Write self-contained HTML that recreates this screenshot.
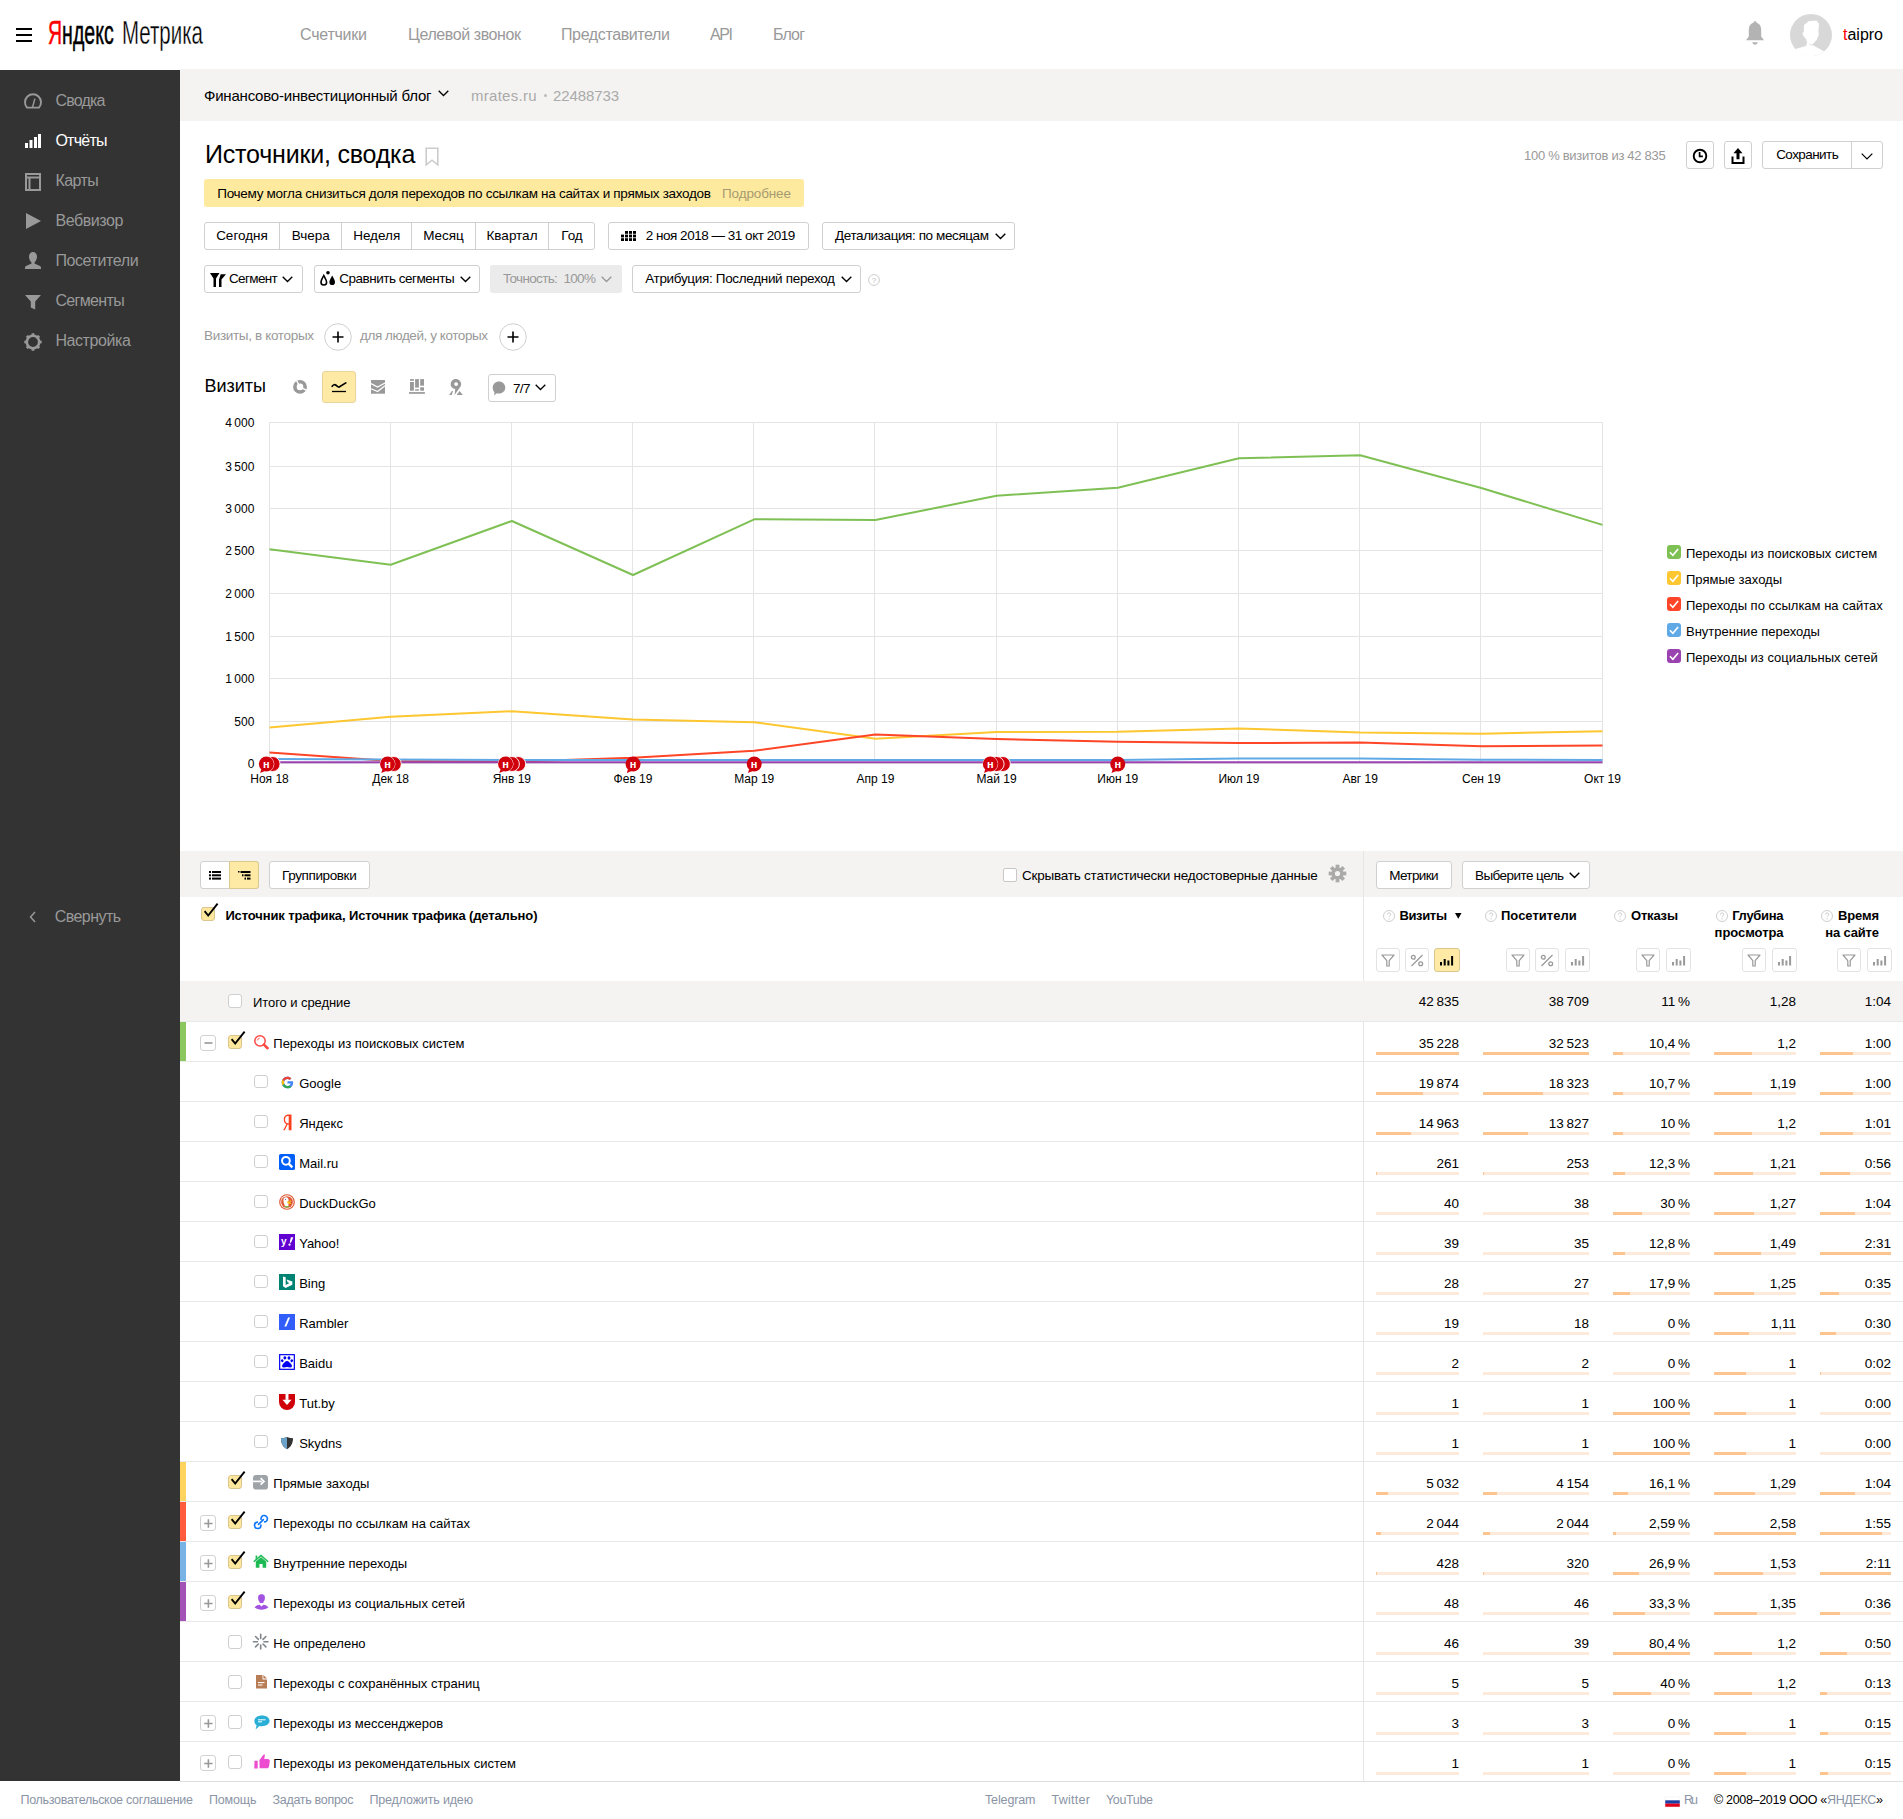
<!DOCTYPE html>
<html><head><meta charset="utf-8"><title>Источники, сводка</title>
<style>
html,body{margin:0;padding:0;}
body{width:1903px;height:1819px;position:relative;overflow:hidden;background:#fff;font-family:'Liberation Sans', sans-serif;}
.t{position:absolute;white-space:pre;}
svg{overflow:visible}
</style></head><body>
<div style="position:absolute;left:16px;top:28px;width:16px;height:2px;background:#000"></div><div style="position:absolute;left:16px;top:34px;width:16px;height:2px;background:#000"></div><div style="position:absolute;left:16px;top:40px;width:16px;height:2px;background:#000"></div><div class="t" style="left:47.8px;top:16.2px;font-size:33px;line-height:33px;font-weight:400;transform:scaleX(0.592);transform-origin:0 0;-webkit-text-stroke:0.5px #000;"><span style="color:#f00;-webkit-text-stroke:0.5px #f00">Я</span>ндекс</div><div class="t" style="left:121.6px;top:16.2px;font-size:33px;line-height:33px;font-weight:400;transform:scaleX(0.620);transform-origin:0 0;-webkit-text-stroke:0.35px #fff;">Метрика</div><div class="t" style="top:26.86px;font-size:16px;line-height:16px;color:#999;font-weight:400;letter-spacing:-0.232px;left:300.00px;">Счетчики</div><div class="t" style="top:26.86px;font-size:16px;line-height:16px;color:#999;font-weight:400;letter-spacing:-0.410px;left:408.00px;">Целевой звонок</div><div class="t" style="top:26.86px;font-size:16px;line-height:16px;color:#999;font-weight:400;letter-spacing:-0.380px;left:561.00px;">Представители</div><div class="t" style="top:26.86px;font-size:16px;line-height:16px;color:#999;font-weight:400;letter-spacing:-1.398px;left:710.00px;">API</div><div class="t" style="top:26.86px;font-size:16px;line-height:16px;color:#999;font-weight:400;letter-spacing:-0.859px;left:773.00px;">Блог</div><svg style="position:absolute;left:1745px;top:20px" width="20" height="26" viewBox="0 0 20 26"><path d="M10 1.2c1 0 1.6.7 1.6 1.6 3.2.9 4.6 3.6 4.6 7.2v6.6l2.8 3.6H1l2.8-3.6V10c0-3.6 1.4-6.3 4.6-7.2 0-.9.6-1.6 1.6-1.6z" fill="#b3b3b3"/><path d="M7.2 22.2h5.6c-.4 1.6-1.4 2.5-2.8 2.5s-2.4-.9-2.8-2.5z" fill="#b3b3b3"/></svg><svg style="position:absolute;left:1790px;top:14px" width="42" height="42" viewBox="0 0 42 42"><circle cx="21" cy="21" r="21" fill="#d8d8d8"/><path d="M13.9 11.2L18.5 7.2L26.5 6.6L29 9.7L28.4 17.4L28.8 20.7L26.6 26L22.6 30.2Q19.8 31 18.2 29.6L17 28.5L16.2 25.2L13.6 22.3L12.4 19.6L13.9 17.4Z" fill="#fff"/><path d="M4.6 35.2L15.9 31.9L17.2 28.6Q19.6 31.8 23 31.2L25.2 32.6L34 37.2A21 21 0 0 1 4.6 35.2Z" fill="#fff"/></svg><div class="t" style="top:27.06px;font-size:16px;line-height:16px;color:#000;font-weight:400;letter-spacing:-0.006px;left:1843.00px;"><span style="color:#f00">t</span>aipro</div><div style="position:absolute;left:0px;top:70px;width:180px;height:1711px;background:#333"></div><div class="t" style="top:93.46px;font-size:16px;line-height:16px;color:#999;font-weight:400;letter-spacing:-0.783px;left:55.40px;">Сводка</div><div class="t" style="top:133.46px;font-size:16px;line-height:16px;color:#fff;font-weight:400;letter-spacing:-0.729px;left:55.40px;">Отчёты</div><div class="t" style="top:173.46px;font-size:16px;line-height:16px;color:#999;font-weight:400;letter-spacing:-0.573px;left:55.40px;">Карты</div><div class="t" style="top:213.46px;font-size:16px;line-height:16px;color:#999;font-weight:400;letter-spacing:-0.422px;left:55.40px;">Вебвизор</div><div class="t" style="top:253.46px;font-size:16px;line-height:16px;color:#999;font-weight:400;letter-spacing:-0.403px;left:55.40px;">Посетители</div><div class="t" style="top:293.46px;font-size:16px;line-height:16px;color:#999;font-weight:400;letter-spacing:-0.651px;left:55.40px;">Сегменты</div><div class="t" style="top:333.46px;font-size:16px;line-height:16px;color:#999;font-weight:400;letter-spacing:-0.408px;left:55.40px;">Настройка</div><svg style="position:absolute;left:24px;top:93px" width="18" height="16" viewBox="0 0 18 16"><path d="M3 14.6A8 8 0 1 1 15 14.6Z" fill="none" stroke="#999" stroke-width="1.9" stroke-linejoin="round"/><path d="M8.4 14.6L10.9 5.6" stroke="#999" stroke-width="1.5"/></svg><svg style="position:absolute;left:25px;top:134px" width="16" height="14" viewBox="0 0 16 14"><rect x="0" y="9" width="3" height="5" fill="#fff"/><rect x="4.5" y="6" width="3" height="8" fill="#fff"/><rect x="9" y="3" width="3" height="11" fill="#fff"/><rect x="13" y="0" width="3" height="14" fill="#fff"/></svg><svg style="position:absolute;left:25px;top:173px" width="16" height="18" viewBox="0 0 16 18"><rect x="1" y="1" width="14" height="16" fill="none" stroke="#999" stroke-width="2"/><path d="M1 4.5h14M4.5 4.5v12.5" stroke="#999" stroke-width="2"/></svg><svg style="position:absolute;left:26px;top:213px" width="15" height="16" viewBox="0 0 15 16"><path d="M0 0L15 8L0 16z" fill="#999"/></svg><svg style="position:absolute;left:25px;top:252px" width="16" height="17" viewBox="0 0 16 17"><path d="M8 0c2.6 0 4 2.2 4 4.8 0 2.5-1.3 4.6-2.5 5.6v1l5.5 2.6c.6.3 1 .9 1 1.6V17H0v-1.4c0-.7.4-1.3 1-1.6l5.5-2.6v-1C5.3 9.4 4 7.3 4 4.8 4 2.2 5.4 0 8 0z" fill="#999"/></svg><svg style="position:absolute;left:25px;top:295px" width="16" height="15" viewBox="0 0 16 15"><path d="M0 0h16L10.2 6.4V14.6L5.8 12.4V6.4z" fill="#999"/></svg><svg style="position:absolute;left:24px;top:333px" width="18" height="18" viewBox="0 0 18 18"><path d="M7.7 0.3h2.6l.5 3.2h-3.6z" transform="rotate(0 9 9)" fill="#999"/><path d="M7.7 0.3h2.6l.5 3.2h-3.6z" transform="rotate(45 9 9)" fill="#999"/><path d="M7.7 0.3h2.6l.5 3.2h-3.6z" transform="rotate(90 9 9)" fill="#999"/><path d="M7.7 0.3h2.6l.5 3.2h-3.6z" transform="rotate(135 9 9)" fill="#999"/><path d="M7.7 0.3h2.6l.5 3.2h-3.6z" transform="rotate(180 9 9)" fill="#999"/><path d="M7.7 0.3h2.6l.5 3.2h-3.6z" transform="rotate(225 9 9)" fill="#999"/><path d="M7.7 0.3h2.6l.5 3.2h-3.6z" transform="rotate(270 9 9)" fill="#999"/><path d="M7.7 0.3h2.6l.5 3.2h-3.6z" transform="rotate(315 9 9)" fill="#999"/><circle cx="9" cy="9" r="6.2" fill="none" stroke="#999" stroke-width="2.6"/></svg><svg style="position:absolute;left:29px;top:911px" width="8" height="12" viewBox="0 0 8 12"><path d="M6 1L1.5 6L6 11" fill="none" stroke="#999" stroke-width="1.5"/></svg><div class="t" style="top:909.46px;font-size:16px;line-height:16px;color:#999;font-weight:400;letter-spacing:-0.567px;left:54.80px;">Свернуть</div><div style="position:absolute;left:180px;top:69px;width:1723px;height:52px;background:#f4f3f1"></div><div class="t" style="top:88.10px;font-size:15px;line-height:15px;color:#000;font-weight:400;letter-spacing:-0.206px;left:204.00px;">Финансово-инвестиционный блог</div><svg style="position:absolute;left:438px;top:90px" width="11" height="7" viewBox="0 0 11 7"><path d="M.7.7L5.5 5.5L10.3.7" fill="none" stroke="#000" stroke-width="1.3"/></svg><div class="t" style="top:88.10px;font-size:15px;line-height:15px;color:#aaa;font-weight:400;letter-spacing:0.268px;left:471.00px;">mrates.ru</div><div style="position:absolute;left:543.5px;top:94px;width:3.0px;height:3px;background:#bbb;border-radius:50%"></div><div class="t" style="top:88.10px;font-size:15px;line-height:15px;color:#aaa;font-weight:400;letter-spacing:-0.107px;left:553.00px;">22488733</div><div class="t" style="top:141.94px;font-size:25px;line-height:25px;color:#000;font-weight:400;letter-spacing:-0.195px;left:205.00px;">Источники, сводка</div><svg style="position:absolute;left:425px;top:147px" width="14" height="20" viewBox="0 0 14 20"><path d="M1.2 1.2h11.6v16.6L7 13.2l-5.8 4.6z" fill="none" stroke="#ccc" stroke-width="1.6"/></svg><div class="t" style="top:148.50px;font-size:13px;line-height:13px;color:#999;font-weight:400;letter-spacing:-0.287px;left:1524.00px;">100 % визитов из 42 835</div><div style="position:absolute;left:1686px;top:141px;width:28px;height:28px;background:#fff;border:1px solid #d0d0d0;border-radius:3px;box-sizing:border-box;"></div><svg style="position:absolute;left:1692px;top:148px" width="16" height="16" viewBox="0 0 16 16"><circle cx="8" cy="8" r="6.3" fill="none" stroke="#000" stroke-width="1.9"/><path d="M7.6 4v4.4h3.3" fill="none" stroke="#000" stroke-width="1.7"/></svg><div style="position:absolute;left:1724px;top:141px;width:28px;height:28px;background:#fff;border:1px solid #d0d0d0;border-radius:3px;box-sizing:border-box;"></div><svg style="position:absolute;left:1731px;top:147px" width="14" height="18" viewBox="0 0 14 18"><path d="M7 1L2.5 6.2h3v6h3v-6h3z" fill="#000"/><path d="M1.5 9.5v6.5h11v-6.5" fill="none" stroke="#000" stroke-width="2"/></svg><div style="position:absolute;left:1762px;top:141px;width:121px;height:28px;background:#fff;border:1px solid #d0d0d0;border-radius:3px;box-sizing:border-box;"></div><div style="position:absolute;left:1851px;top:141px;width:1px;height:28px;background:#d0d0d0"></div><div class="t" style="top:147.77px;font-size:13.5px;line-height:13.5px;color:#000;font-weight:400;letter-spacing:-0.574px;left:1776.20px;">Сохранить</div><svg style="position:absolute;left:1861px;top:153px" width="12" height="7" viewBox="0 0 12 7"><path d="M.7.7L6 6L11.3.7" fill="none" stroke="#000" stroke-width="1.2"/></svg><div style="position:absolute;left:204px;top:179px;width:600px;height:28px;background:#feea9f;border-radius:3px"></div><div class="t" style="top:186.77px;font-size:13.5px;line-height:13.5px;color:#000;font-weight:400;letter-spacing:-0.300px;left:217.30px;">Почему могла снизиться доля переходов по ссылкам на сайтах и прямых заходов</div><div class="t" style="top:186.77px;font-size:13.5px;line-height:13.5px;color:#a69a72;font-weight:400;letter-spacing:-0.127px;left:722.00px;">Подробнее</div><div style="position:absolute;left:204px;top:222px;width:391px;height:28px;background:#fff;border:1px solid #d0d0d0;border-radius:3px;box-sizing:border-box;"></div><div style="position:absolute;left:279px;top:223px;width:1px;height:26px;background:#d0d0d0"></div><div style="position:absolute;left:341.4px;top:223px;width:1.0px;height:26px;background:#d0d0d0"></div><div style="position:absolute;left:411px;top:223px;width:1px;height:26px;background:#d0d0d0"></div><div style="position:absolute;left:475px;top:223px;width:1px;height:26px;background:#d0d0d0"></div><div style="position:absolute;left:548px;top:223px;width:1px;height:26px;background:#d0d0d0"></div><div class="t" style="top:228.77px;font-size:13.5px;line-height:13.5px;color:#000;font-weight:400;left:42.00px;width:400px;text-align:center;">Сегодня</div><div class="t" style="top:228.77px;font-size:13.5px;line-height:13.5px;color:#000;font-weight:400;left:110.70px;width:400px;text-align:center;">Вчера</div><div class="t" style="top:228.77px;font-size:13.5px;line-height:13.5px;color:#000;font-weight:400;left:176.70px;width:400px;text-align:center;">Неделя</div><div class="t" style="top:228.77px;font-size:13.5px;line-height:13.5px;color:#000;font-weight:400;left:243.50px;width:400px;text-align:center;">Месяц</div><div class="t" style="top:228.77px;font-size:13.5px;line-height:13.5px;color:#000;font-weight:400;left:312.00px;width:400px;text-align:center;">Квартал</div><div class="t" style="top:228.77px;font-size:13.5px;line-height:13.5px;color:#000;font-weight:400;left:372.00px;width:400px;text-align:center;">Год</div><div style="position:absolute;left:608px;top:222px;width:201px;height:28px;background:#fff;border:1px solid #d0d0d0;border-radius:3px;box-sizing:border-box;"></div><svg style="position:absolute;left:621px;top:230.5px" width="15" height="10" viewBox="0 0 15 10"><rect x="4" y="0.0" width="3" height="2.8" fill="#000"/><rect x="8" y="0.0" width="3" height="2.8" fill="#000"/><rect x="12" y="0.0" width="3" height="2.8" fill="#000"/><rect x="0" y="3.6" width="3" height="2.8" fill="#000"/><rect x="4" y="3.6" width="3" height="2.8" fill="#000"/><rect x="8" y="3.6" width="3" height="2.8" fill="#000"/><rect x="12" y="3.6" width="3" height="2.8" fill="#000"/><rect x="0" y="7.2" width="3" height="2.8" fill="#000"/><rect x="4" y="7.2" width="3" height="2.8" fill="#000"/><rect x="8" y="7.2" width="3" height="2.8" fill="#000"/><rect x="12" y="7.2" width="3" height="2.8" fill="#000"/></svg><div class="t" style="top:229.37px;font-size:13.5px;line-height:13.5px;color:#000;font-weight:400;letter-spacing:-0.479px;left:645.70px;">2 ноя 2018 — 31 окт 2019</div><div style="position:absolute;left:822px;top:222px;width:193px;height:28px;background:#fff;border:1px solid #d0d0d0;border-radius:3px;box-sizing:border-box;"></div><div class="t" style="top:229.37px;font-size:13.5px;line-height:13.5px;color:#000;font-weight:400;letter-spacing:-0.404px;left:835.00px;">Детализация: по месяцам</div><svg style="position:absolute;left:995px;top:233px" width="11" height="7" viewBox="0 0 11 7"><path d="M.7.7L5.5 5.5L10.3.7" fill="none" stroke="#000" stroke-width="1.4"/></svg><div style="position:absolute;left:204px;top:265px;width:99px;height:28px;background:#fff;border:1px solid #d0d0d0;border-radius:3px;box-sizing:border-box;"></div><svg style="position:absolute;left:210px;top:273px" width="16" height="14" viewBox="0 0 16 14"><path d="M0 0h9.5L6 5.5V14H3.5V5.5z" fill="#000"/><path d="M10.2 1.2L15.5 1.2L11 6.5V14H8.5V6.5z" fill="#000" transform="translate(0.5 0)"/></svg><div class="t" style="top:272.07px;font-size:13.5px;line-height:13.5px;color:#000;font-weight:400;letter-spacing:-0.635px;left:229.00px;">Сегмент</div><svg style="position:absolute;left:282px;top:276px" width="11" height="7" viewBox="0 0 11 7"><path d="M.7.7L5.5 5.5L10.3.7" fill="none" stroke="#000" stroke-width="1.4"/></svg><div style="position:absolute;left:314px;top:265px;width:166px;height:28px;background:#fff;border:1px solid #d0d0d0;border-radius:3px;box-sizing:border-box;"></div><svg style="position:absolute;left:320px;top:271px" width="16" height="15" viewBox="0 0 16 15"><circle cx="8" cy="1.8" r="1.8" fill="#000"/><path d="M3.8 4.5C2.5 7 1 9 1 11.2a2.8 2.8 0 0 0 5.6 0C6.6 9 5 7 3.8 4.5z" fill="none" stroke="#000" stroke-width="1.6"/><path d="M12.2 4.5C11 7 9.4 9 9.4 11.2a2.8 2.8 0 0 0 5.6 0C15 9 13.4 7 12.2 4.5z" fill="#000"/></svg><div class="t" style="top:272.07px;font-size:13.5px;line-height:13.5px;color:#000;font-weight:400;letter-spacing:-0.495px;left:339.30px;">Сравнить сегменты</div><svg style="position:absolute;left:459.5px;top:276px" width="11" height="7" viewBox="0 0 11 7"><path d="M.7.7L5.5 5.5L10.3.7" fill="none" stroke="#000" stroke-width="1.4"/></svg><div style="position:absolute;left:490px;top:265px;width:132px;height:28px;background:#ebebeb;border-radius:3px"></div><div class="t" style="top:272.07px;font-size:13.5px;line-height:13.5px;color:#999;font-weight:400;letter-spacing:-0.647px;left:502.90px;">Точность:  100%</div><svg style="position:absolute;left:600.5px;top:276px" width="11" height="7" viewBox="0 0 11 7"><path d="M.7.7L5.5 5.5L10.3.7" fill="none" stroke="#999" stroke-width="1.4"/></svg><div style="position:absolute;left:632px;top:265px;width:229px;height:28px;background:#fff;border:1px solid #d0d0d0;border-radius:3px;box-sizing:border-box;"></div><div class="t" style="top:272.07px;font-size:13.5px;line-height:13.5px;color:#000;font-weight:400;letter-spacing:-0.328px;left:645.20px;">Атрибуция: Последний переход</div><svg style="position:absolute;left:840.5px;top:276px" width="11" height="7" viewBox="0 0 11 7"><path d="M.7.7L5.5 5.5L10.3.7" fill="none" stroke="#000" stroke-width="1.4"/></svg><svg style="position:absolute;left:868px;top:274px" width="12" height="12" viewBox="0 0 12 12"><circle cx="6" cy="6" r="5.4" fill="none" stroke="#ccc" stroke-width="1"/><text x="6" y="9" font-size="8" text-anchor="middle" fill="#bbb" font-family="Liberation Sans">?</text></svg><div class="t" style="top:328.57px;font-size:13.5px;line-height:13.5px;color:#999;font-weight:400;letter-spacing:-0.335px;left:204.00px;">Визиты, в которых</div><svg style="position:absolute;left:324px;top:323px" width="28" height="28" viewBox="0 0 28 28"><circle cx="14" cy="14" r="13.3" fill="#fff" stroke="#d0d0d0" stroke-width="1"/><path d="M14 8.5v11M8.5 14h11" stroke="#000" stroke-width="1.6"/></svg><div class="t" style="top:328.57px;font-size:13.5px;line-height:13.5px;color:#999;font-weight:400;letter-spacing:-0.433px;left:360.00px;">для людей, у которых</div><svg style="position:absolute;left:498.5px;top:323px" width="28" height="28" viewBox="0 0 28 28"><circle cx="14" cy="14" r="13.3" fill="#fff" stroke="#d0d0d0" stroke-width="1"/><path d="M14 8.5v11M8.5 14h11" stroke="#000" stroke-width="1.6"/></svg><div class="t" style="top:376.76px;font-size:18px;line-height:18px;color:#000;font-weight:400;letter-spacing:-0.032px;left:204.60px;">Визиты</div><svg style="position:absolute;left:292px;top:379px" width="16" height="16" viewBox="0 0 16 16"><circle cx="8" cy="7.9" r="5.1" fill="none" stroke="#999" stroke-width="3.6"/><path d="M8 7.9L4.6 1.6M8 7.9L14.6 11.3" stroke="#fff" stroke-width="1.3"/></svg><div style="position:absolute;left:322px;top:371px;width:34px;height:32px;background:#feeaa5;border:1px solid #e8d39a;border-radius:3px;box-sizing:border-box"></div><svg style="position:absolute;left:331px;top:381px" width="16" height="12" viewBox="0 0 16 12"><path d="M1.2 5.3C2.4 3.5 3.6 3.3 5 4.3S7.2 6.5 8.2 6L14.8 1.9" fill="none" stroke="#000" stroke-width="1.7" stroke-linecap="round"/><path d="M1 10.5h14" stroke="#000" stroke-width="1.3"/></svg><svg style="position:absolute;left:371px;top:380px" width="14" height="14" viewBox="0 0 14 14"><rect x="0" y="0" width="14" height="13.7" fill="#999"/><path d="M0 3.6L6.6 7.1L14 3M0 8.8L6.6 11.5L14 5.7" fill="none" stroke="#fff" stroke-width="1.2"/></svg><svg style="position:absolute;left:409px;top:379px" width="16" height="16" viewBox="0 0 16 16"><g fill="#999"><rect x="1" y="0.1" width="3.9" height="1.7"/><rect x="1" y="3" width="3.9" height="8.7"/><rect x="6.1" y="0.1" width="3.8" height="8.5"/><rect x="6.1" y="10.2" width="3.8" height="1.5"/><rect x="11.2" y="0.1" width="3.8" height="6.6"/><rect x="11.2" y="8.3" width="3.8" height="3.4"/><rect x="0" y="13.1" width="15.9" height="1.7"/></g></svg><svg style="position:absolute;left:449px;top:379px" width="15" height="16" viewBox="0 0 15 16"><path d="M7.1 0.1A5 5 0 0 1 11.7 7.2L5.6 15.9L6.2 10.1A5 5 0 0 1 7.1 0.1z" fill="#999"/><circle cx="7.1" cy="5.1" r="1.9" fill="#fff"/><path d="M0.1 15.9L2.9 12.1H4L2.7 15.9zM7.6 15.9L10.7 12L13.8 15.9z" fill="#999"/></svg><div style="position:absolute;left:488px;top:374px;width:68px;height:28px;background:#fff;border:1px solid #d0d0d0;border-radius:3px;box-sizing:border-box;"></div><svg style="position:absolute;left:492px;top:381px" width="14" height="15" viewBox="0 0 14 15"><path d="M7 0.4c3.5 0 6.3 2.7 6.3 6.2S10.5 12.6 7 12.6c-.8 0-1.6-.1-2.3-.4L2.2 14.4l.3-3.2C1.3 10 .7 8.4.7 6.6.7 3.1 3.5.4 7 .4z" fill="#999"/></svg><div class="t" style="top:381.57px;font-size:13.5px;line-height:13.5px;color:#000;font-weight:400;letter-spacing:-0.691px;left:513.00px;">7/7</div><svg style="position:absolute;left:535px;top:384px" width="11" height="7" viewBox="0 0 11 7"><path d="M.7.7L5.5 5.5L10.3.7" fill="none" stroke="#000" stroke-width="1.3"/></svg><svg style="position:absolute;left:0;top:0" width="1903" height="1819"><path d="M269 422.5H1602.5" stroke="#e4e4e4" stroke-width="1"/><path d="M269 466.5H1602.5" stroke="#e4e4e4" stroke-width="1"/><path d="M269 508.5H1602.5" stroke="#e4e4e4" stroke-width="1"/><path d="M269 550.5H1602.5" stroke="#e4e4e4" stroke-width="1"/><path d="M269 593.5H1602.5" stroke="#e4e4e4" stroke-width="1"/><path d="M269 636.5H1602.5" stroke="#e4e4e4" stroke-width="1"/><path d="M269 678.5H1602.5" stroke="#e4e4e4" stroke-width="1"/><path d="M269 721.5H1602.5" stroke="#e4e4e4" stroke-width="1"/><path d="M269 763.5H1602.5" stroke="#e4e4e4" stroke-width="1"/><path d="M269.5 422V763.5" stroke="#e4e4e4" stroke-width="1"/><path d="M390.5 422V763.5" stroke="#e4e4e4" stroke-width="1"/><path d="M511.5 422V763.5" stroke="#e4e4e4" stroke-width="1"/><path d="M632.5 422V763.5" stroke="#e4e4e4" stroke-width="1"/><path d="M753.5 422V763.5" stroke="#e4e4e4" stroke-width="1"/><path d="M874.5 422V763.5" stroke="#e4e4e4" stroke-width="1"/><path d="M996.5 422V763.5" stroke="#e4e4e4" stroke-width="1"/><path d="M1117.5 422V763.5" stroke="#e4e4e4" stroke-width="1"/><path d="M1238.5 422V763.5" stroke="#e4e4e4" stroke-width="1"/><path d="M1359.5 422V763.5" stroke="#e4e4e4" stroke-width="1"/><path d="M1480.5 422V763.5" stroke="#e4e4e4" stroke-width="1"/><path d="M1602.5 422V763.5" stroke="#e4e4e4" stroke-width="1"/></svg><div class="t" style="top:416.64px;font-size:12px;line-height:12px;color:#000;font-weight:400;right:1648.70px;">4 000</div><div class="t" style="top:460.64px;font-size:12px;line-height:12px;color:#000;font-weight:400;right:1648.70px;">3 500</div><div class="t" style="top:502.64px;font-size:12px;line-height:12px;color:#000;font-weight:400;right:1648.70px;">3 000</div><div class="t" style="top:544.64px;font-size:12px;line-height:12px;color:#000;font-weight:400;right:1648.70px;">2 500</div><div class="t" style="top:587.64px;font-size:12px;line-height:12px;color:#000;font-weight:400;right:1648.70px;">2 000</div><div class="t" style="top:630.64px;font-size:12px;line-height:12px;color:#000;font-weight:400;right:1648.70px;">1 500</div><div class="t" style="top:672.64px;font-size:12px;line-height:12px;color:#000;font-weight:400;right:1648.70px;">1 000</div><div class="t" style="top:715.64px;font-size:12px;line-height:12px;color:#000;font-weight:400;right:1648.70px;">500</div><div class="t" style="top:757.64px;font-size:12px;line-height:12px;color:#000;font-weight:400;right:1648.70px;">0</div><div class="t" style="top:772.84px;font-size:12px;line-height:12px;color:#000;font-weight:400;left:69.50px;width:400px;text-align:center;">Ноя 18</div><div class="t" style="top:772.84px;font-size:12px;line-height:12px;color:#000;font-weight:400;left:190.68px;width:400px;text-align:center;">Дек 18</div><div class="t" style="top:772.84px;font-size:12px;line-height:12px;color:#000;font-weight:400;left:311.86px;width:400px;text-align:center;">Янв 19</div><div class="t" style="top:772.84px;font-size:12px;line-height:12px;color:#000;font-weight:400;left:433.05px;width:400px;text-align:center;">Фев 19</div><div class="t" style="top:772.84px;font-size:12px;line-height:12px;color:#000;font-weight:400;left:554.23px;width:400px;text-align:center;">Мар 19</div><div class="t" style="top:772.84px;font-size:12px;line-height:12px;color:#000;font-weight:400;left:675.41px;width:400px;text-align:center;">Апр 19</div><div class="t" style="top:772.84px;font-size:12px;line-height:12px;color:#000;font-weight:400;left:796.59px;width:400px;text-align:center;">Май 19</div><div class="t" style="top:772.84px;font-size:12px;line-height:12px;color:#000;font-weight:400;left:917.77px;width:400px;text-align:center;">Июн 19</div><div class="t" style="top:772.84px;font-size:12px;line-height:12px;color:#000;font-weight:400;left:1038.95px;width:400px;text-align:center;">Июл 19</div><div class="t" style="top:772.84px;font-size:12px;line-height:12px;color:#000;font-weight:400;left:1160.14px;width:400px;text-align:center;">Авг 19</div><div class="t" style="top:772.84px;font-size:12px;line-height:12px;color:#000;font-weight:400;left:1281.32px;width:400px;text-align:center;">Сен 19</div><div class="t" style="top:772.84px;font-size:12px;line-height:12px;color:#000;font-weight:400;left:1402.50px;width:400px;text-align:center;">Окт 19</div><svg style="position:absolute;left:0;top:0" width="1903" height="1819"><path d="M269.5 549.3 L390.7 564.7 L511.9 521.0 L633.0 575.0 L754.2 519.3 L875.4 520.0 L996.6 495.8 L1117.8 487.7 L1239.0 458.2 L1360.1 455.3 L1481.3 488.0 L1602.5 524.9" fill="none" stroke="#7fc054" stroke-width="2" stroke-linejoin="round"/><path d="M269.5 727.6 L390.7 716.7 L511.9 711.2 L633.0 719.4 L754.2 722.2 L875.4 738.7 L996.6 732.0 L1117.8 731.7 L1239.0 728.4 L1360.1 732.5 L1481.3 733.7 L1602.5 731.3" fill="none" stroke="#fdc731" stroke-width="2" stroke-linejoin="round"/><path d="M269.5 752.6 L390.7 761.0 L511.9 761.8 L633.0 757.7 L754.2 750.8 L875.4 734.5 L996.6 739.0 L1117.8 741.8 L1239.0 743.0 L1360.1 742.6 L1481.3 746.2 L1602.5 745.4" fill="none" stroke="#ff4527" stroke-width="2" stroke-linejoin="round"/><path d="M269.5 759.0 L390.7 759.5 L511.9 760.0 L633.0 760.0 L754.2 760.0 L875.4 760.0 L996.6 760.0 L1117.8 760.0 L1239.0 758.5 L1360.1 758.5 L1481.3 759.8 L1602.5 760.0" fill="none" stroke="#5fa9e6" stroke-width="2" stroke-linejoin="round"/><path d="M269.5 762.3 L390.7 762.3 L511.9 762.3 L633.0 762.3 L754.2 762.3 L875.4 762.3 L996.6 762.3 L1117.8 762.3 L1239.0 762.3 L1360.1 762.3 L1481.3 762.3 L1602.5 762.3" fill="none" stroke="#9a43b0" stroke-width="2" stroke-linejoin="round"/></svg><svg style="position:absolute;left:0;top:0" width="1903" height="1819"><circle cx="272.6" cy="764" r="7.5" fill="#d0000d" stroke="#fff" stroke-width="0.9"/><circle cx="266.4" cy="764" r="7.9" fill="#fff"/><path d="M261.15000000000003 769.5L260.15000000000003 773L264.85 771z" fill="#d0000d"/><circle cx="266.35" cy="764" r="7.5" fill="#d0000d"/><text x="266.4" y="768.2" font-size="11" font-weight="700" text-anchor="middle" fill="#fff" font-family="Liberation Sans">н</text><circle cx="393.8" cy="764" r="7.5" fill="#d0000d" stroke="#fff" stroke-width="0.9"/><circle cx="387.5" cy="764" r="7.9" fill="#fff"/><path d="M382.3318181818182 769.5L381.3318181818182 773L386.0318181818182 771z" fill="#d0000d"/><circle cx="387.5318181818182" cy="764" r="7.5" fill="#d0000d"/><text x="387.5" y="768.2" font-size="11" font-weight="700" text-anchor="middle" fill="#fff" font-family="Liberation Sans">н</text><circle cx="518.2" cy="764" r="7.5" fill="#d0000d" stroke="#fff" stroke-width="0.9"/><circle cx="511.9" cy="764" r="7.5" fill="#d0000d" stroke="#fff" stroke-width="0.9"/><circle cx="505.6" cy="764" r="7.9" fill="#fff"/><path d="M500.3636363636364 769.5L499.3636363636364 773L504.06363636363636 771z" fill="#d0000d"/><circle cx="505.56363636363636" cy="764" r="7.5" fill="#d0000d"/><text x="505.6" y="768.2" font-size="11" font-weight="700" text-anchor="middle" fill="#fff" font-family="Liberation Sans">н</text><path d="M627.8454545454545 769.5L626.8454545454545 773L631.5454545454545 771z" fill="#d0000d"/><circle cx="633.0454545454545" cy="764" r="7.5" fill="#d0000d"/><text x="633.0" y="768.2" font-size="11" font-weight="700" text-anchor="middle" fill="#fff" font-family="Liberation Sans">н</text><path d="M749.0272727272727 769.5L748.0272727272727 773L752.7272727272727 771z" fill="#d0000d"/><circle cx="754.2272727272727" cy="764" r="7.5" fill="#d0000d"/><text x="754.2" y="768.2" font-size="11" font-weight="700" text-anchor="middle" fill="#fff" font-family="Liberation Sans">н</text><circle cx="1002.9" cy="764" r="7.5" fill="#d0000d" stroke="#fff" stroke-width="0.9"/><circle cx="996.6" cy="764" r="7.5" fill="#d0000d" stroke="#fff" stroke-width="0.9"/><circle cx="990.3" cy="764" r="7.9" fill="#fff"/><path d="M985.0909090909091 769.5L984.0909090909091 773L988.7909090909092 771z" fill="#d0000d"/><circle cx="990.2909090909092" cy="764" r="7.5" fill="#d0000d"/><text x="990.3" y="768.2" font-size="11" font-weight="700" text-anchor="middle" fill="#fff" font-family="Liberation Sans">н</text><path d="M1112.5727272727272 769.5L1111.5727272727272 773L1116.2727272727273 771z" fill="#d0000d"/><circle cx="1117.7727272727273" cy="764" r="7.5" fill="#d0000d"/><text x="1117.8" y="768.2" font-size="11" font-weight="700" text-anchor="middle" fill="#fff" font-family="Liberation Sans">н</text></svg><svg style="position:absolute;left:1667px;top:545px" width="14" height="14" viewBox="0 0 14 14"><rect width="14" height="14" rx="3" fill="#7fc054"/><path d="M2.9 7.3L5.9 10.3L11.1 4.1" fill="none" stroke="#fff" stroke-width="1.6"/></svg><div class="t" style="top:547.20px;font-size:13px;line-height:13px;color:#000;font-weight:400;left:1686.00px;">Переходы из поисковых систем</div><svg style="position:absolute;left:1667px;top:571px" width="14" height="14" viewBox="0 0 14 14"><rect width="14" height="14" rx="3" fill="#fdc731"/><path d="M2.9 7.3L5.9 10.3L11.1 4.1" fill="none" stroke="#fff" stroke-width="1.6"/></svg><div class="t" style="top:573.20px;font-size:13px;line-height:13px;color:#000;font-weight:400;left:1686.00px;">Прямые заходы</div><svg style="position:absolute;left:1667px;top:597px" width="14" height="14" viewBox="0 0 14 14"><rect width="14" height="14" rx="3" fill="#ff4527"/><path d="M2.9 7.3L5.9 10.3L11.1 4.1" fill="none" stroke="#fff" stroke-width="1.6"/></svg><div class="t" style="top:599.20px;font-size:13px;line-height:13px;color:#000;font-weight:400;left:1686.00px;">Переходы по ссылкам на сайтах</div><svg style="position:absolute;left:1667px;top:623px" width="14" height="14" viewBox="0 0 14 14"><rect width="14" height="14" rx="3" fill="#5fa9e6"/><path d="M2.9 7.3L5.9 10.3L11.1 4.1" fill="none" stroke="#fff" stroke-width="1.6"/></svg><div class="t" style="top:625.20px;font-size:13px;line-height:13px;color:#000;font-weight:400;left:1686.00px;">Внутренние переходы</div><svg style="position:absolute;left:1667px;top:649px" width="14" height="14" viewBox="0 0 14 14"><rect width="14" height="14" rx="3" fill="#9a43b0"/><path d="M2.9 7.3L5.9 10.3L11.1 4.1" fill="none" stroke="#fff" stroke-width="1.6"/></svg><div class="t" style="top:651.20px;font-size:13px;line-height:13px;color:#000;font-weight:400;left:1686.00px;">Переходы из социальных сетей</div><div style="position:absolute;left:180px;top:851px;width:1723px;height:46px;background:#f4f3f1"></div><div style="position:absolute;left:1363px;top:851px;width:1px;height:930px;background:#e6e6e6"></div><div style="position:absolute;left:200px;top:861px;width:59px;height:28px;background:#fff;border:1px solid #d0d0d0;border-radius:3px;box-sizing:border-box;"></div><div style="position:absolute;left:229px;top:861px;width:30px;height:28px;background:#feeaa5;border:1px solid #dcc78f;border-radius:0 3px 3px 0;box-sizing:border-box"></div><svg style="position:absolute;left:209px;top:871px" width="12" height="9" viewBox="0 0 12 9"><rect x="0" y="0" width="2" height="2" fill="#000"/><rect x="3" y="0" width="9" height="2" fill="#000"/><rect x="0" y="3.3" width="2" height="2" fill="#000"/><rect x="3" y="3.3" width="9" height="2" fill="#000"/><rect x="0" y="6.6" width="2" height="2" fill="#000"/><rect x="3" y="6.6" width="9" height="2" fill="#000"/></svg><svg style="position:absolute;left:238px;top:871px" width="13" height="9" viewBox="0 0 13 9"><rect x="0" y="0" width="1.5" height="1.5" fill="#000"/><rect x="2.5" y="0" width="10" height="2" fill="#000"/><rect x="4" y="3.3" width="1.5" height="2" fill="#000"/><rect x="6.5" y="3.3" width="6" height="2" fill="#000"/><rect x="6.5" y="6.6" width="1.5" height="2" fill="#000"/><rect x="9" y="6.6" width="3.5" height="2" fill="#000"/></svg><div style="position:absolute;left:269px;top:861px;width:101px;height:28px;background:#fff;border:1px solid #d0d0d0;border-radius:3px;box-sizing:border-box;"></div><div class="t" style="top:868.87px;font-size:13.5px;line-height:13.5px;color:#000;font-weight:400;letter-spacing:-0.377px;left:282.00px;">Группировки</div><div style="position:absolute;left:1003px;top:867.5px;width:14px;height:14.0px;background:#fff;border:1px solid #c8c8c8;border-radius:2px;box-sizing:border-box"></div><div class="t" style="top:868.97px;font-size:13.5px;line-height:13.5px;color:#000;font-weight:400;letter-spacing:-0.223px;left:1022.00px;">Скрывать статистически недостоверные данные</div><svg style="position:absolute;left:1328.5px;top:864.5px" width="17" height="17" viewBox="0 0 17 17"><rect x="6.6" y="-0.3" width="3.8" height="4" transform="rotate(0 8.5 8.5)" fill="#aaa"/><rect x="6.6" y="-0.3" width="3.8" height="4" transform="rotate(45 8.5 8.5)" fill="#aaa"/><rect x="6.6" y="-0.3" width="3.8" height="4" transform="rotate(90 8.5 8.5)" fill="#aaa"/><rect x="6.6" y="-0.3" width="3.8" height="4" transform="rotate(135 8.5 8.5)" fill="#aaa"/><rect x="6.6" y="-0.3" width="3.8" height="4" transform="rotate(180 8.5 8.5)" fill="#aaa"/><rect x="6.6" y="-0.3" width="3.8" height="4" transform="rotate(225 8.5 8.5)" fill="#aaa"/><rect x="6.6" y="-0.3" width="3.8" height="4" transform="rotate(270 8.5 8.5)" fill="#aaa"/><rect x="6.6" y="-0.3" width="3.8" height="4" transform="rotate(315 8.5 8.5)" fill="#aaa"/><circle cx="8.5" cy="8.5" r="6" fill="#aaa"/><circle cx="8.5" cy="8.5" r="2.6" fill="#f4f3f1"/></svg><div style="position:absolute;left:1376px;top:861px;width:76px;height:28px;background:#fff;border:1px solid #d0d0d0;border-radius:3px;box-sizing:border-box;"></div><div class="t" style="top:868.87px;font-size:13.5px;line-height:13.5px;color:#000;font-weight:400;letter-spacing:-0.640px;left:1389.20px;">Метрики</div><div style="position:absolute;left:1462px;top:861px;width:128px;height:28px;background:#fff;border:1px solid #d0d0d0;border-radius:3px;box-sizing:border-box;"></div><div class="t" style="top:868.87px;font-size:13.5px;line-height:13.5px;color:#000;font-weight:400;letter-spacing:-0.557px;left:1475.00px;">Выберите цель</div><svg style="position:absolute;left:1569px;top:872px" width="11" height="7" viewBox="0 0 11 7"><path d="M.7.7L5.5 5.5L10.3.7" fill="none" stroke="#000" stroke-width="1.4"/></svg><div style="position:absolute;left:201.2px;top:907.4px;width:13.599999999999994px;height:13.399999999999977px;background:#fde79f;border:1px solid #d9c58d;border-radius:3px;box-sizing:border-box;"></div><svg style="position:absolute;left:200.7px;top:903.4px" width="18" height="18" viewBox="0 0 18 18"><path d="M3.6 8.2L7.2 12.6L16.6 0.6" fill="none" stroke="#000" stroke-width="1.9" stroke-linejoin="miter"/></svg><div class="t" style="top:909.40px;font-size:13px;line-height:13px;color:#000;font-weight:700;letter-spacing:-0.123px;left:225.40px;">Источник трафика, Источник трафика (детально)</div><svg style="position:absolute;left:1382.7px;top:909.9px" width="12" height="12" viewBox="0 0 12 12"><circle cx="6" cy="6" r="5.5" fill="none" stroke="#cfcfcf" stroke-width="1"/><path d="M4.3 4.6c0-1 .8-1.7 1.7-1.7s1.7.6 1.7 1.5c0 1.2-1.6 1.3-1.6 2.6" fill="none" stroke="#c4c4c4" stroke-width="0.9"/><circle cx="6.1" cy="8.9" r="0.6" fill="#c4c4c4"/></svg><div class="t" style="top:908.80px;font-size:13px;line-height:13px;color:#000;font-weight:700;letter-spacing:-0.343px;left:1399.40px;">Визиты</div><svg style="position:absolute;left:1455px;top:913px" width="7" height="6" viewBox="0 0 7 6"><path d="M0 0h6.5L3.25 5.8z" fill="#000"/></svg><svg style="position:absolute;left:1484.8px;top:909.9px" width="12" height="12" viewBox="0 0 12 12"><circle cx="6" cy="6" r="5.5" fill="none" stroke="#cfcfcf" stroke-width="1"/><path d="M4.3 4.6c0-1 .8-1.7 1.7-1.7s1.7.6 1.7 1.5c0 1.2-1.6 1.3-1.6 2.6" fill="none" stroke="#c4c4c4" stroke-width="0.9"/><circle cx="6.1" cy="8.9" r="0.6" fill="#c4c4c4"/></svg><div class="t" style="top:908.80px;font-size:13px;line-height:13px;color:#000;font-weight:700;letter-spacing:0.010px;left:1501.00px;">Посетители</div><svg style="position:absolute;left:1613.9px;top:909.7px" width="12" height="12" viewBox="0 0 12 12"><circle cx="6" cy="6" r="5.5" fill="none" stroke="#cfcfcf" stroke-width="1"/><path d="M4.3 4.6c0-1 .8-1.7 1.7-1.7s1.7.6 1.7 1.5c0 1.2-1.6 1.3-1.6 2.6" fill="none" stroke="#c4c4c4" stroke-width="0.9"/><circle cx="6.1" cy="8.9" r="0.6" fill="#c4c4c4"/></svg><div class="t" style="top:908.80px;font-size:13px;line-height:13px;color:#000;font-weight:700;letter-spacing:-0.188px;left:1631.00px;">Отказы</div><svg style="position:absolute;left:1715.8px;top:909.7px" width="12" height="12" viewBox="0 0 12 12"><circle cx="6" cy="6" r="5.5" fill="none" stroke="#cfcfcf" stroke-width="1"/><path d="M4.3 4.6c0-1 .8-1.7 1.7-1.7s1.7.6 1.7 1.5c0 1.2-1.6 1.3-1.6 2.6" fill="none" stroke="#c4c4c4" stroke-width="0.9"/><circle cx="6.1" cy="8.9" r="0.6" fill="#c4c4c4"/></svg><div class="t" style="top:908.80px;font-size:13px;line-height:13px;color:#000;font-weight:700;letter-spacing:-0.293px;left:1732.20px;">Глубина</div><div class="t" style="top:926.20px;font-size:13px;line-height:13px;color:#000;font-weight:700;letter-spacing:-0.051px;left:1714.60px;">просмотра</div><svg style="position:absolute;left:1820.9px;top:909.7px" width="12" height="12" viewBox="0 0 12 12"><circle cx="6" cy="6" r="5.5" fill="none" stroke="#cfcfcf" stroke-width="1"/><path d="M4.3 4.6c0-1 .8-1.7 1.7-1.7s1.7.6 1.7 1.5c0 1.2-1.6 1.3-1.6 2.6" fill="none" stroke="#c4c4c4" stroke-width="0.9"/><circle cx="6.1" cy="8.9" r="0.6" fill="#c4c4c4"/></svg><div class="t" style="top:908.80px;font-size:13px;line-height:13px;color:#000;font-weight:700;letter-spacing:-0.148px;left:1838.00px;">Время</div><div class="t" style="top:926.20px;font-size:13px;line-height:13px;color:#000;font-weight:700;letter-spacing:-0.172px;left:1825.30px;">на сайте</div><div style="position:absolute;left:1376px;top:948px;width:24px;height:24px;background:#fff;border:1px solid #e3e3e3;border-radius:3px;box-sizing:border-box;"></div><svg style="position:absolute;left:1381px;top:954px" width="14" height="13" viewBox="0 0 14 13"><path d="M1 1h12L8.2 6.6V12H5.8V6.6z" fill="none" stroke="#999" stroke-width="1.2" stroke-linejoin="round"/></svg><div style="position:absolute;left:1405px;top:948px;width:24px;height:24px;background:#fff;border:1px solid #e3e3e3;border-radius:3px;box-sizing:border-box;"></div><svg style="position:absolute;left:1410px;top:954px" width="14" height="13" viewBox="0 0 14 13"><circle cx="3.3" cy="3.3" r="1.9" fill="none" stroke="#999" stroke-width="1.3"/><circle cx="10.7" cy="9.7" r="1.9" fill="none" stroke="#999" stroke-width="1.3"/><path d="M1.5 12L12.5 1" stroke="#999" stroke-width="1.3"/></svg><div style="position:absolute;left:1434px;top:948px;width:26px;height:24px;background:#feeaa5;border:1px solid #dcc78f;border-radius:3px;box-sizing:border-box;"></div><svg style="position:absolute;left:1440px;top:955px" width="14" height="11" viewBox="0 0 14 11"><rect x="0" y="7" width="2" height="3.5" fill="#000"/><rect x="3.7" y="4" width="2" height="6.5" fill="#000"/><rect x="7.4" y="5.5" width="2" height="5" fill="#000"/><rect x="11.1" y="1" width="2" height="9.5" fill="#000"/></svg><div style="position:absolute;left:1506px;top:948px;width:24px;height:24px;background:#fff;border:1px solid #e3e3e3;border-radius:3px;box-sizing:border-box;"></div><svg style="position:absolute;left:1511px;top:954px" width="14" height="13" viewBox="0 0 14 13"><path d="M1 1h12L8.2 6.6V12H5.8V6.6z" fill="none" stroke="#999" stroke-width="1.2" stroke-linejoin="round"/></svg><div style="position:absolute;left:1535px;top:948px;width:24px;height:24px;background:#fff;border:1px solid #e3e3e3;border-radius:3px;box-sizing:border-box;"></div><svg style="position:absolute;left:1540px;top:954px" width="14" height="13" viewBox="0 0 14 13"><circle cx="3.3" cy="3.3" r="1.9" fill="none" stroke="#999" stroke-width="1.3"/><circle cx="10.7" cy="9.7" r="1.9" fill="none" stroke="#999" stroke-width="1.3"/><path d="M1.5 12L12.5 1" stroke="#999" stroke-width="1.3"/></svg><div style="position:absolute;left:1564.5px;top:948px;width:25.0px;height:24px;background:#fff;border:1px solid #e3e3e3;border-radius:3px;box-sizing:border-box;"></div><svg style="position:absolute;left:1570.5px;top:955px" width="14" height="11" viewBox="0 0 14 11"><rect x="0" y="7" width="2" height="3.5" fill="#999"/><rect x="3.7" y="4" width="2" height="6.5" fill="#999"/><rect x="7.4" y="5.5" width="2" height="5" fill="#999"/><rect x="11.1" y="1" width="2" height="9.5" fill="#999"/></svg><div style="position:absolute;left:1636px;top:948px;width:24px;height:24px;background:#fff;border:1px solid #e3e3e3;border-radius:3px;box-sizing:border-box;"></div><svg style="position:absolute;left:1641px;top:954px" width="14" height="13" viewBox="0 0 14 13"><path d="M1 1h12L8.2 6.6V12H5.8V6.6z" fill="none" stroke="#999" stroke-width="1.2" stroke-linejoin="round"/></svg><div style="position:absolute;left:1665.5px;top:948px;width:25.0px;height:24px;background:#fff;border:1px solid #e3e3e3;border-radius:3px;box-sizing:border-box;"></div><svg style="position:absolute;left:1671.5px;top:955px" width="14" height="11" viewBox="0 0 14 11"><rect x="0" y="7" width="2" height="3.5" fill="#999"/><rect x="3.7" y="4" width="2" height="6.5" fill="#999"/><rect x="7.4" y="5.5" width="2" height="5" fill="#999"/><rect x="11.1" y="1" width="2" height="9.5" fill="#999"/></svg><div style="position:absolute;left:1742px;top:948px;width:24px;height:24px;background:#fff;border:1px solid #e3e3e3;border-radius:3px;box-sizing:border-box;"></div><svg style="position:absolute;left:1747px;top:954px" width="14" height="13" viewBox="0 0 14 13"><path d="M1 1h12L8.2 6.6V12H5.8V6.6z" fill="none" stroke="#999" stroke-width="1.2" stroke-linejoin="round"/></svg><div style="position:absolute;left:1771.5px;top:948px;width:25.0px;height:24px;background:#fff;border:1px solid #e3e3e3;border-radius:3px;box-sizing:border-box;"></div><svg style="position:absolute;left:1777.5px;top:955px" width="14" height="11" viewBox="0 0 14 11"><rect x="0" y="7" width="2" height="3.5" fill="#999"/><rect x="3.7" y="4" width="2" height="6.5" fill="#999"/><rect x="7.4" y="5.5" width="2" height="5" fill="#999"/><rect x="11.1" y="1" width="2" height="9.5" fill="#999"/></svg><div style="position:absolute;left:1837px;top:948px;width:24px;height:24px;background:#fff;border:1px solid #e3e3e3;border-radius:3px;box-sizing:border-box;"></div><svg style="position:absolute;left:1842px;top:954px" width="14" height="13" viewBox="0 0 14 13"><path d="M1 1h12L8.2 6.6V12H5.8V6.6z" fill="none" stroke="#999" stroke-width="1.2" stroke-linejoin="round"/></svg><div style="position:absolute;left:1866.5px;top:948px;width:25.0px;height:24px;background:#fff;border:1px solid #e3e3e3;border-radius:3px;box-sizing:border-box;"></div><svg style="position:absolute;left:1872.5px;top:955px" width="14" height="11" viewBox="0 0 14 11"><rect x="0" y="7" width="2" height="3.5" fill="#999"/><rect x="3.7" y="4" width="2" height="6.5" fill="#999"/><rect x="7.4" y="5.5" width="2" height="5" fill="#999"/><rect x="11.1" y="1" width="2" height="9.5" fill="#999"/></svg><div style="position:absolute;left:180px;top:981px;width:1723px;height:40px;background:#f4f3f1"></div><div style="position:absolute;left:228.3px;top:994.3px;width:13.599999999999994px;height:13.399999999999977px;background:#fff;border:1px solid #cfcfcf;border-radius:3px;box-sizing:border-box;"></div><div class="t" style="top:996.00px;font-size:13px;line-height:13px;color:#000;font-weight:400;letter-spacing:-0.077px;left:253.10px;">Итого и средние</div><div class="t" style="top:994.87px;font-size:13.5px;line-height:13.5px;color:#000;font-weight:400;right:444.00px;">42 835</div><div class="t" style="top:994.87px;font-size:13.5px;line-height:13.5px;color:#000;font-weight:400;right:314.00px;">38 709</div><div class="t" style="top:994.87px;font-size:13.5px;line-height:13.5px;color:#000;font-weight:400;right:213.00px;">11 %</div><div class="t" style="top:994.87px;font-size:13.5px;line-height:13.5px;color:#000;font-weight:400;right:107.00px;">1,28</div><div class="t" style="top:994.87px;font-size:13.5px;line-height:13.5px;color:#000;font-weight:400;right:12.00px;">1:04</div><div style="position:absolute;left:180px;top:1022px;width:6px;height:39px;background:#8cc65f"></div><div style="position:absolute;left:200px;top:1035.3px;width:15.599999999999994px;height:15.700000000000045px;background:#fff;border:1px solid #d3d3d3;border-radius:3px;box-sizing:border-box;"></div><svg style="position:absolute;left:203.5px;top:1042.3px" width="9" height="2" viewBox="0 0 9 2"><path d="M0.5 1h8" stroke="#999" stroke-width="1.6"/></svg><div style="position:absolute;left:228.3px;top:1035.3px;width:13.599999999999994px;height:13.400000000000091px;background:#fde79f;border:1px solid #d9c58d;border-radius:3px;box-sizing:border-box;"></div><svg style="position:absolute;left:227.8px;top:1031.3px" width="18" height="18" viewBox="0 0 18 18"><path d="M3.6 8.2L7.2 12.6L16.6 0.6" fill="none" stroke="#000" stroke-width="1.9" stroke-linejoin="miter"/></svg><div class="t" style="top:1037.00px;font-size:13px;line-height:13px;color:#000;font-weight:400;left:273.30px;">Переходы из поисковых систем</div><svg style="position:absolute;left:250px;top:1030px" width="22" height="24" viewBox="0 0 22 24"><circle cx="10" cy="10.9" r="5.2" fill="none" stroke="#ff4a44" stroke-width="1.5"/><path d="M7.4 10.4A2.9 2.9 0 0 1 9.6 8.1" fill="none" stroke="#ff4a44" stroke-width="0.9"/><path d="M13.9 14.6L17.6 18.2" stroke="#ff4a44" stroke-width="2.6" stroke-linecap="round"/></svg><div class="t" style="top:1037.17px;font-size:13.5px;line-height:13.5px;color:#000;font-weight:400;right:444.00px;">35 228</div><div style="position:absolute;left:1376px;top:1052px;width:83px;height:3px;background:#fdeadb"></div><div style="position:absolute;left:1376px;top:1052px;width:83.0px;height:3px;background:#fdc48f"></div><div class="t" style="top:1037.17px;font-size:13.5px;line-height:13.5px;color:#000;font-weight:400;right:314.00px;">32 523</div><div style="position:absolute;left:1483px;top:1052px;width:106px;height:3px;background:#fdeadb"></div><div style="position:absolute;left:1483px;top:1052px;width:106.0px;height:3px;background:#fdc48f"></div><div class="t" style="top:1037.17px;font-size:13.5px;line-height:13.5px;color:#000;font-weight:400;right:213.00px;">10,4 %</div><div style="position:absolute;left:1613px;top:1052px;width:77px;height:3px;background:#fdeadb"></div><div style="position:absolute;left:1613px;top:1052px;width:10.0px;height:3px;background:#fdc48f"></div><div class="t" style="top:1037.17px;font-size:13.5px;line-height:13.5px;color:#000;font-weight:400;right:107.00px;">1,2</div><div style="position:absolute;left:1714px;top:1052px;width:82px;height:3px;background:#fdeadb"></div><div style="position:absolute;left:1714px;top:1052px;width:38.09999999999991px;height:3px;background:#fdc48f"></div><div class="t" style="top:1037.17px;font-size:13.5px;line-height:13.5px;color:#000;font-weight:400;right:12.00px;">1:00</div><div style="position:absolute;left:1820px;top:1052px;width:71px;height:3px;background:#fdeadb"></div><div style="position:absolute;left:1820px;top:1052px;width:32.5px;height:3px;background:#fdc48f"></div><div style="position:absolute;left:254.2px;top:1075px;width:13.600000000000023px;height:13.400000000000091px;background:#fff;border:1px solid #cfcfcf;border-radius:3px;box-sizing:border-box;"></div><div class="t" style="top:1076.80px;font-size:13px;line-height:13px;color:#000;font-weight:400;left:299.20px;">Google</div><svg style="position:absolute;left:280.8px;top:1075.8px" width="13" height="13" viewBox="0 0 13 13"><path d="M11.9 5.3H6.5v2.3h3.1c-.3 1.4-1.5 2.3-3.1 2.3-1.9 0-3.4-1.5-3.4-3.4S4.6 3.1 6.5 3.1c.8 0 1.6.3 2.2.8l1.7-1.7C9.4 1.3 8 .7 6.5.7 3.3.7.7 3.3.7 6.5s2.6 5.8 5.8 5.8c3.3 0 5.6-2.3 5.6-5.6 0-.5 0-1-.2-1.4z" fill="#4285f4"/><path d="M1.4 3.7l1.9 1.4C3.8 3.9 5 3.1 6.5 3.1c.8 0 1.6.3 2.2.8l1.7-1.7C9.4 1.3 8 .7 6.5.7 4.3.7 2.4 1.9 1.4 3.7z" fill="#ea4335"/><path d="M6.5 12.3c1.5 0 2.9-.5 3.9-1.4L8.6 9.4c-.5.4-1.2.6-2.1.6-1.5 0-2.7-1-3.2-2.3l-1.9 1.5c1 1.8 2.9 3.1 5.1 3.1z" fill="#34a853"/><path d="M1.4 3.7C1 4.5.7 5.5.7 6.5s.3 2 .7 2.8l1.9-1.5c-.1-.4-.2-.8-.2-1.3s.1-.9.2-1.3z" fill="#fbbc05"/></svg><div class="t" style="top:1077.17px;font-size:13.5px;line-height:13.5px;color:#000;font-weight:400;right:444.00px;">19 874</div><div style="position:absolute;left:1376px;top:1092px;width:83px;height:3px;background:#fdeadb"></div><div style="position:absolute;left:1376px;top:1092px;width:46.799999999999955px;height:3px;background:#fdc48f"></div><div class="t" style="top:1077.17px;font-size:13.5px;line-height:13.5px;color:#000;font-weight:400;right:314.00px;">18 323</div><div style="position:absolute;left:1483px;top:1092px;width:106px;height:3px;background:#fdeadb"></div><div style="position:absolute;left:1483px;top:1092px;width:59.700000000000045px;height:3px;background:#fdc48f"></div><div class="t" style="top:1077.17px;font-size:13.5px;line-height:13.5px;color:#000;font-weight:400;right:213.00px;">10,7 %</div><div style="position:absolute;left:1613px;top:1092px;width:77px;height:3px;background:#fdeadb"></div><div style="position:absolute;left:1613px;top:1092px;width:10.200000000000045px;height:3px;background:#fdc48f"></div><div class="t" style="top:1077.17px;font-size:13.5px;line-height:13.5px;color:#000;font-weight:400;right:107.00px;">1,19</div><div style="position:absolute;left:1714px;top:1092px;width:82px;height:3px;background:#fdeadb"></div><div style="position:absolute;left:1714px;top:1092px;width:37.799999999999955px;height:3px;background:#fdc48f"></div><div class="t" style="top:1077.17px;font-size:13.5px;line-height:13.5px;color:#000;font-weight:400;right:12.00px;">1:00</div><div style="position:absolute;left:1820px;top:1092px;width:71px;height:3px;background:#fdeadb"></div><div style="position:absolute;left:1820px;top:1092px;width:32.5px;height:3px;background:#fdc48f"></div><div style="position:absolute;left:254.2px;top:1115px;width:13.600000000000023px;height:13.400000000000091px;background:#fff;border:1px solid #cfcfcf;border-radius:3px;box-sizing:border-box;"></div><div class="t" style="top:1116.80px;font-size:13px;line-height:13px;color:#000;font-weight:400;left:299.20px;">Яндекс</div><svg style="position:absolute;left:282.6px;top:1114px" width="10" height="17" viewBox="0 0 10 17"><path d="M5.7 16.2V10.6H4.6L1.7 16.2H.2l3.2-6C1.8 9.5.8 8.1.8 5.6.8 2.2 2.9.6 5.7.6h2.8v15.6zM5.7 1.9H4.9c-1.6 0-2.8 1-2.8 3.6 0 2.5 1.1 3.7 2.8 3.7h.8z" fill="#fc3f1d"/></svg><div class="t" style="top:1117.17px;font-size:13.5px;line-height:13.5px;color:#000;font-weight:400;right:444.00px;">14 963</div><div style="position:absolute;left:1376px;top:1132px;width:83px;height:3px;background:#fdeadb"></div><div style="position:absolute;left:1376px;top:1132px;width:35.299999999999955px;height:3px;background:#fdc48f"></div><div class="t" style="top:1117.17px;font-size:13.5px;line-height:13.5px;color:#000;font-weight:400;right:314.00px;">13 827</div><div style="position:absolute;left:1483px;top:1132px;width:106px;height:3px;background:#fdeadb"></div><div style="position:absolute;left:1483px;top:1132px;width:45.09999999999991px;height:3px;background:#fdc48f"></div><div class="t" style="top:1117.17px;font-size:13.5px;line-height:13.5px;color:#000;font-weight:400;right:213.00px;">10 %</div><div style="position:absolute;left:1613px;top:1132px;width:77px;height:3px;background:#fdeadb"></div><div style="position:absolute;left:1613px;top:1132px;width:9.599999999999909px;height:3px;background:#fdc48f"></div><div class="t" style="top:1117.17px;font-size:13.5px;line-height:13.5px;color:#000;font-weight:400;right:107.00px;">1,2</div><div style="position:absolute;left:1714px;top:1132px;width:82px;height:3px;background:#fdeadb"></div><div style="position:absolute;left:1714px;top:1132px;width:38.09999999999991px;height:3px;background:#fdc48f"></div><div class="t" style="top:1117.17px;font-size:13.5px;line-height:13.5px;color:#000;font-weight:400;right:12.00px;">1:01</div><div style="position:absolute;left:1820px;top:1132px;width:71px;height:3px;background:#fdeadb"></div><div style="position:absolute;left:1820px;top:1132px;width:33.09999999999991px;height:3px;background:#fdc48f"></div><div style="position:absolute;left:254.2px;top:1155px;width:13.600000000000023px;height:13.400000000000091px;background:#fff;border:1px solid #cfcfcf;border-radius:3px;box-sizing:border-box;"></div><div class="t" style="top:1156.80px;font-size:13px;line-height:13px;color:#000;font-weight:400;left:299.20px;">Mail.ru</div><svg style="position:absolute;left:279px;top:1154px" width="16" height="16" viewBox="0 0 12 12"><rect width="12" height="12" rx="1.2" fill="#005ff9"/><circle cx="5.2" cy="5.1" r="2.9" fill="none" stroke="#fff" stroke-width="1.5"/><path d="M7.2 7.2l2.8 2.8" stroke="#fff" stroke-width="1.8"/></svg><div class="t" style="top:1157.17px;font-size:13.5px;line-height:13.5px;color:#000;font-weight:400;right:444.00px;">261</div><div style="position:absolute;left:1376px;top:1172px;width:83px;height:3px;background:#fdeadb"></div><div style="position:absolute;left:1376px;top:1172px;width:1px;height:3px;background:#fdc48f"></div><div class="t" style="top:1157.17px;font-size:13.5px;line-height:13.5px;color:#000;font-weight:400;right:314.00px;">253</div><div style="position:absolute;left:1483px;top:1172px;width:106px;height:3px;background:#fdeadb"></div><div style="position:absolute;left:1483px;top:1172px;width:1px;height:3px;background:#fdc48f"></div><div class="t" style="top:1157.17px;font-size:13.5px;line-height:13.5px;color:#000;font-weight:400;right:213.00px;">12,3 %</div><div style="position:absolute;left:1613px;top:1172px;width:77px;height:3px;background:#fdeadb"></div><div style="position:absolute;left:1613px;top:1172px;width:11.799999999999955px;height:3px;background:#fdc48f"></div><div class="t" style="top:1157.17px;font-size:13.5px;line-height:13.5px;color:#000;font-weight:400;right:107.00px;">1,21</div><div style="position:absolute;left:1714px;top:1172px;width:82px;height:3px;background:#fdeadb"></div><div style="position:absolute;left:1714px;top:1172px;width:38.5px;height:3px;background:#fdc48f"></div><div class="t" style="top:1157.17px;font-size:13.5px;line-height:13.5px;color:#000;font-weight:400;right:12.00px;">0:56</div><div style="position:absolute;left:1820px;top:1172px;width:71px;height:3px;background:#fdeadb"></div><div style="position:absolute;left:1820px;top:1172px;width:30.40000000000009px;height:3px;background:#fdc48f"></div><div style="position:absolute;left:254.2px;top:1195px;width:13.600000000000023px;height:13.400000000000091px;background:#fff;border:1px solid #cfcfcf;border-radius:3px;box-sizing:border-box;"></div><div class="t" style="top:1196.80px;font-size:13px;line-height:13px;color:#000;font-weight:400;left:299.20px;">DuckDuckGo</div><svg style="position:absolute;left:279px;top:1194px" width="16" height="16" viewBox="0 0 12 12"><circle cx="6" cy="6" r="5.9" fill="#de5833"/><circle cx="6" cy="6" r="5" fill="#fff"/><circle cx="6" cy="6" r="4.4" fill="#de5833"/><path d="M3.6 3.2c.9-1.1 2.6-1.1 3.3.1.4.8.2 1.6.3 2.6l-.2 3.4H4.6c-.6-1.5-1.2-2.8-1.3-4.2 0-.7.1-1.4.3-1.9z" fill="#fff"/><circle cx="4.9" cy="3.9" r=".4" fill="#2d4f8e"/><path d="M6.3 5.6l2.4-.9.2 1-1.2.5 1.3.3-.3 1-2.4-.5z" fill="#fdd20a"/><path d="M6.4 6l1.9-.6" stroke="#e37151" stroke-width=".5"/><path d="M4.3 9.1h3v.9h-3z" fill="#65bc46"/></svg><div class="t" style="top:1197.17px;font-size:13.5px;line-height:13.5px;color:#000;font-weight:400;right:444.00px;">40</div><div style="position:absolute;left:1376px;top:1212px;width:83px;height:3px;background:#fdeadb"></div><div class="t" style="top:1197.17px;font-size:13.5px;line-height:13.5px;color:#000;font-weight:400;right:314.00px;">38</div><div style="position:absolute;left:1483px;top:1212px;width:106px;height:3px;background:#fdeadb"></div><div class="t" style="top:1197.17px;font-size:13.5px;line-height:13.5px;color:#000;font-weight:400;right:213.00px;">30 %</div><div style="position:absolute;left:1613px;top:1212px;width:77px;height:3px;background:#fdeadb"></div><div style="position:absolute;left:1613px;top:1212px;width:28.700000000000045px;height:3px;background:#fdc48f"></div><div class="t" style="top:1197.17px;font-size:13.5px;line-height:13.5px;color:#000;font-weight:400;right:107.00px;">1,27</div><div style="position:absolute;left:1714px;top:1212px;width:82px;height:3px;background:#fdeadb"></div><div style="position:absolute;left:1714px;top:1212px;width:40.40000000000009px;height:3px;background:#fdc48f"></div><div class="t" style="top:1197.17px;font-size:13.5px;line-height:13.5px;color:#000;font-weight:400;right:12.00px;">1:04</div><div style="position:absolute;left:1820px;top:1212px;width:71px;height:3px;background:#fdeadb"></div><div style="position:absolute;left:1820px;top:1212px;width:34.700000000000045px;height:3px;background:#fdc48f"></div><div style="position:absolute;left:254.2px;top:1235px;width:13.600000000000023px;height:13.400000000000091px;background:#fff;border:1px solid #cfcfcf;border-radius:3px;box-sizing:border-box;"></div><div class="t" style="top:1236.80px;font-size:13px;line-height:13px;color:#000;font-weight:400;left:299.20px;">Yahoo!</div><svg style="position:absolute;left:279px;top:1234px" width="16" height="16" viewBox="0 0 12 12"><rect width="12" height="12" fill="#6001d2"/><text x="1.5" y="8.6" font-size="7.5" font-weight="700" fill="#fff" font-family="Liberation Sans">y</text><path d="M8.9 2.4h1.9L9 6.6H8z" fill="#fff"/><circle cx="7.9" cy="8" r=".85" fill="#fff"/></svg><div class="t" style="top:1237.17px;font-size:13.5px;line-height:13.5px;color:#000;font-weight:400;right:444.00px;">39</div><div style="position:absolute;left:1376px;top:1252px;width:83px;height:3px;background:#fdeadb"></div><div class="t" style="top:1237.17px;font-size:13.5px;line-height:13.5px;color:#000;font-weight:400;right:314.00px;">35</div><div style="position:absolute;left:1483px;top:1252px;width:106px;height:3px;background:#fdeadb"></div><div class="t" style="top:1237.17px;font-size:13.5px;line-height:13.5px;color:#000;font-weight:400;right:213.00px;">12,8 %</div><div style="position:absolute;left:1613px;top:1252px;width:77px;height:3px;background:#fdeadb"></div><div style="position:absolute;left:1613px;top:1252px;width:12.299999999999955px;height:3px;background:#fdc48f"></div><div class="t" style="top:1237.17px;font-size:13.5px;line-height:13.5px;color:#000;font-weight:400;right:107.00px;">1,49</div><div style="position:absolute;left:1714px;top:1252px;width:82px;height:3px;background:#fdeadb"></div><div style="position:absolute;left:1714px;top:1252px;width:47.40000000000009px;height:3px;background:#fdc48f"></div><div class="t" style="top:1237.17px;font-size:13.5px;line-height:13.5px;color:#000;font-weight:400;right:12.00px;">2:31</div><div style="position:absolute;left:1820px;top:1252px;width:71px;height:3px;background:#fdeadb"></div><div style="position:absolute;left:1820px;top:1252px;width:71.0px;height:3px;background:#fdc48f"></div><div style="position:absolute;left:254.2px;top:1275px;width:13.600000000000023px;height:13.400000000000091px;background:#fff;border:1px solid #cfcfcf;border-radius:3px;box-sizing:border-box;"></div><div class="t" style="top:1276.80px;font-size:13px;line-height:13px;color:#000;font-weight:400;left:299.20px;">Bing</div><svg style="position:absolute;left:279px;top:1274px" width="16" height="16" viewBox="0 0 12 12"><rect width="12" height="12" fill="#008373"/><path d="M3 1.8l2 .7v5.8l2.8-1.5-1.3-.6-.8-2 4.3 1.5v2.3L5 10.5 3 9.2z" fill="#fff"/></svg><div class="t" style="top:1277.17px;font-size:13.5px;line-height:13.5px;color:#000;font-weight:400;right:444.00px;">28</div><div style="position:absolute;left:1376px;top:1292px;width:83px;height:3px;background:#fdeadb"></div><div class="t" style="top:1277.17px;font-size:13.5px;line-height:13.5px;color:#000;font-weight:400;right:314.00px;">27</div><div style="position:absolute;left:1483px;top:1292px;width:106px;height:3px;background:#fdeadb"></div><div class="t" style="top:1277.17px;font-size:13.5px;line-height:13.5px;color:#000;font-weight:400;right:213.00px;">17,9 %</div><div style="position:absolute;left:1613px;top:1292px;width:77px;height:3px;background:#fdeadb"></div><div style="position:absolute;left:1613px;top:1292px;width:17.09999999999991px;height:3px;background:#fdc48f"></div><div class="t" style="top:1277.17px;font-size:13.5px;line-height:13.5px;color:#000;font-weight:400;right:107.00px;">1,25</div><div style="position:absolute;left:1714px;top:1292px;width:82px;height:3px;background:#fdeadb"></div><div style="position:absolute;left:1714px;top:1292px;width:39.700000000000045px;height:3px;background:#fdc48f"></div><div class="t" style="top:1277.17px;font-size:13.5px;line-height:13.5px;color:#000;font-weight:400;right:12.00px;">0:35</div><div style="position:absolute;left:1820px;top:1292px;width:71px;height:3px;background:#fdeadb"></div><div style="position:absolute;left:1820px;top:1292px;width:19.0px;height:3px;background:#fdc48f"></div><div style="position:absolute;left:254.2px;top:1315px;width:13.600000000000023px;height:13.400000000000091px;background:#fff;border:1px solid #cfcfcf;border-radius:3px;box-sizing:border-box;"></div><div class="t" style="top:1316.80px;font-size:13px;line-height:13px;color:#000;font-weight:400;left:299.20px;">Rambler</div><svg style="position:absolute;left:279px;top:1314px" width="16" height="16" viewBox="0 0 12 12"><rect width="12" height="12" fill="#315efb"/><path d="M6.8 2.6h1.5L5.5 9.4H4z" fill="#fff"/></svg><div class="t" style="top:1317.17px;font-size:13.5px;line-height:13.5px;color:#000;font-weight:400;right:444.00px;">19</div><div style="position:absolute;left:1376px;top:1332px;width:83px;height:3px;background:#fdeadb"></div><div class="t" style="top:1317.17px;font-size:13.5px;line-height:13.5px;color:#000;font-weight:400;right:314.00px;">18</div><div style="position:absolute;left:1483px;top:1332px;width:106px;height:3px;background:#fdeadb"></div><div class="t" style="top:1317.17px;font-size:13.5px;line-height:13.5px;color:#000;font-weight:400;right:213.00px;">0 %</div><div style="position:absolute;left:1613px;top:1332px;width:77px;height:3px;background:#fdeadb"></div><div class="t" style="top:1317.17px;font-size:13.5px;line-height:13.5px;color:#000;font-weight:400;right:107.00px;">1,11</div><div style="position:absolute;left:1714px;top:1332px;width:82px;height:3px;background:#fdeadb"></div><div style="position:absolute;left:1714px;top:1332px;width:35.299999999999955px;height:3px;background:#fdc48f"></div><div class="t" style="top:1317.17px;font-size:13.5px;line-height:13.5px;color:#000;font-weight:400;right:12.00px;">0:30</div><div style="position:absolute;left:1820px;top:1332px;width:71px;height:3px;background:#fdeadb"></div><div style="position:absolute;left:1820px;top:1332px;width:16.299999999999955px;height:3px;background:#fdc48f"></div><div style="position:absolute;left:254.2px;top:1355px;width:13.600000000000023px;height:13.400000000000091px;background:#fff;border:1px solid #cfcfcf;border-radius:3px;box-sizing:border-box;"></div><div class="t" style="top:1356.80px;font-size:13px;line-height:13px;color:#000;font-weight:400;left:299.20px;">Baidu</div><svg style="position:absolute;left:279px;top:1354px" width="16" height="16" viewBox="0 0 12 12"><rect x=".5" y=".5" width="11" height="11" fill="#fff" stroke="#0000f0" stroke-width="0.9"/><g fill="#0000f0"><ellipse cx="4.4" cy="2.9" rx="1.1" ry="1.3"/><ellipse cx="7.5" cy="3" rx="1.1" ry="1.3"/><ellipse cx="2.4" cy="5" rx="1" ry="1.1" transform="rotate(-30 2.4 5)"/><ellipse cx="9.6" cy="5" rx="1" ry="1.1" transform="rotate(30 9.6 5)"/><path d="M6 5.2c1.3 0 2.3 1.5 3.3 2.6.8.9.4 2.3-.8 2.3-.9 0-1.6-.4-2.5-.4s-1.6.4-2.5.4c-1.2 0-1.6-1.4-.8-2.3C3.7 6.7 4.7 5.2 6 5.2z"/></g></svg><div class="t" style="top:1357.17px;font-size:13.5px;line-height:13.5px;color:#000;font-weight:400;right:444.00px;">2</div><div style="position:absolute;left:1376px;top:1372px;width:83px;height:3px;background:#fdeadb"></div><div class="t" style="top:1357.17px;font-size:13.5px;line-height:13.5px;color:#000;font-weight:400;right:314.00px;">2</div><div style="position:absolute;left:1483px;top:1372px;width:106px;height:3px;background:#fdeadb"></div><div class="t" style="top:1357.17px;font-size:13.5px;line-height:13.5px;color:#000;font-weight:400;right:213.00px;">0 %</div><div style="position:absolute;left:1613px;top:1372px;width:77px;height:3px;background:#fdeadb"></div><div class="t" style="top:1357.17px;font-size:13.5px;line-height:13.5px;color:#000;font-weight:400;right:107.00px;">1</div><div style="position:absolute;left:1714px;top:1372px;width:82px;height:3px;background:#fdeadb"></div><div style="position:absolute;left:1714px;top:1372px;width:31.799999999999955px;height:3px;background:#fdc48f"></div><div class="t" style="top:1357.17px;font-size:13.5px;line-height:13.5px;color:#000;font-weight:400;right:12.00px;">0:02</div><div style="position:absolute;left:1820px;top:1372px;width:71px;height:3px;background:#fdeadb"></div><div style="position:absolute;left:1820px;top:1372px;width:1.099999999999909px;height:3px;background:#fdc48f"></div><div style="position:absolute;left:254.2px;top:1395px;width:13.600000000000023px;height:13.400000000000091px;background:#fff;border:1px solid #cfcfcf;border-radius:3px;box-sizing:border-box;"></div><div class="t" style="top:1396.80px;font-size:13px;line-height:13px;color:#000;font-weight:400;left:299.20px;">Tut.by</div><svg style="position:absolute;left:279px;top:1394px" width="16" height="16" viewBox="0 0 12 12"><path d="M0 0h12v6a6 6 0 0 1-12 0z" fill="#d0000a"/><path d="M4.9 0h2.2v4.4H4.9z" fill="#fff"/><path d="M2.6 4.3H9.4L6 8.2z" fill="#fff"/></svg><div class="t" style="top:1397.17px;font-size:13.5px;line-height:13.5px;color:#000;font-weight:400;right:444.00px;">1</div><div style="position:absolute;left:1376px;top:1412px;width:83px;height:3px;background:#fdeadb"></div><div class="t" style="top:1397.17px;font-size:13.5px;line-height:13.5px;color:#000;font-weight:400;right:314.00px;">1</div><div style="position:absolute;left:1483px;top:1412px;width:106px;height:3px;background:#fdeadb"></div><div class="t" style="top:1397.17px;font-size:13.5px;line-height:13.5px;color:#000;font-weight:400;right:213.00px;">100 %</div><div style="position:absolute;left:1613px;top:1412px;width:77px;height:3px;background:#fdeadb"></div><div style="position:absolute;left:1613px;top:1412px;width:77.0px;height:3px;background:#fdc48f"></div><div class="t" style="top:1397.17px;font-size:13.5px;line-height:13.5px;color:#000;font-weight:400;right:107.00px;">1</div><div style="position:absolute;left:1714px;top:1412px;width:82px;height:3px;background:#fdeadb"></div><div style="position:absolute;left:1714px;top:1412px;width:31.799999999999955px;height:3px;background:#fdc48f"></div><div class="t" style="top:1397.17px;font-size:13.5px;line-height:13.5px;color:#000;font-weight:400;right:12.00px;">0:00</div><div style="position:absolute;left:1820px;top:1412px;width:71px;height:3px;background:#fdeadb"></div><div style="position:absolute;left:254.2px;top:1435px;width:13.600000000000023px;height:13.400000000000091px;background:#fff;border:1px solid #cfcfcf;border-radius:3px;box-sizing:border-box;"></div><div class="t" style="top:1436.80px;font-size:13px;line-height:13px;color:#000;font-weight:400;left:299.20px;">Skydns</div><svg style="position:absolute;left:280.3px;top:1435.6px" width="14" height="14" viewBox="0 0 12 12"><path d="M6 .8c1.8.8 3.5 1.2 5.2 1.2C11 6.5 9.5 9.5 6 11.4 2.5 9.5 1 6.5.8 2 2.5 2 4.2 1.6 6 .8z" fill="#333"/><path d="M6 .8C4.2 1.6 2.5 2 .8 2 1 6.5 2.5 9.5 6 11.4z" fill="#6aa2c8"/></svg><div class="t" style="top:1437.17px;font-size:13.5px;line-height:13.5px;color:#000;font-weight:400;right:444.00px;">1</div><div style="position:absolute;left:1376px;top:1452px;width:83px;height:3px;background:#fdeadb"></div><div class="t" style="top:1437.17px;font-size:13.5px;line-height:13.5px;color:#000;font-weight:400;right:314.00px;">1</div><div style="position:absolute;left:1483px;top:1452px;width:106px;height:3px;background:#fdeadb"></div><div class="t" style="top:1437.17px;font-size:13.5px;line-height:13.5px;color:#000;font-weight:400;right:213.00px;">100 %</div><div style="position:absolute;left:1613px;top:1452px;width:77px;height:3px;background:#fdeadb"></div><div style="position:absolute;left:1613px;top:1452px;width:77.0px;height:3px;background:#fdc48f"></div><div class="t" style="top:1437.17px;font-size:13.5px;line-height:13.5px;color:#000;font-weight:400;right:107.00px;">1</div><div style="position:absolute;left:1714px;top:1452px;width:82px;height:3px;background:#fdeadb"></div><div style="position:absolute;left:1714px;top:1452px;width:31.799999999999955px;height:3px;background:#fdc48f"></div><div class="t" style="top:1437.17px;font-size:13.5px;line-height:13.5px;color:#000;font-weight:400;right:12.00px;">0:00</div><div style="position:absolute;left:1820px;top:1452px;width:71px;height:3px;background:#fdeadb"></div><div style="position:absolute;left:180px;top:1462px;width:6px;height:39px;background:#fed45e"></div><div style="position:absolute;left:228.3px;top:1475.3px;width:13.599999999999994px;height:13.400000000000091px;background:#fde79f;border:1px solid #d9c58d;border-radius:3px;box-sizing:border-box;"></div><svg style="position:absolute;left:227.8px;top:1471.3px" width="18" height="18" viewBox="0 0 18 18"><path d="M3.6 8.2L7.2 12.6L16.6 0.6" fill="none" stroke="#000" stroke-width="1.9" stroke-linejoin="miter"/></svg><div class="t" style="top:1477.00px;font-size:13px;line-height:13px;color:#000;font-weight:400;left:273.30px;">Прямые заходы</div><svg style="position:absolute;left:253px;top:1475px" width="15" height="15" viewBox="0 0 15 15"><rect x="0" y="0" width="15" height="14.6" rx="3.2" fill="#9ea3a8"/><path d="M0 6.4h8.8" stroke="#fff" stroke-width="1.7"/><path d="M7.6 3.2l3.4 3.2-3.4 3.2" fill="none" stroke="#fff" stroke-width="1.7"/></svg><div class="t" style="top:1477.17px;font-size:13.5px;line-height:13.5px;color:#000;font-weight:400;right:444.00px;">5 032</div><div style="position:absolute;left:1376px;top:1492px;width:83px;height:3px;background:#fdeadb"></div><div style="position:absolute;left:1376px;top:1492px;width:11.900000000000091px;height:3px;background:#fdc48f"></div><div class="t" style="top:1477.17px;font-size:13.5px;line-height:13.5px;color:#000;font-weight:400;right:314.00px;">4 154</div><div style="position:absolute;left:1483px;top:1492px;width:106px;height:3px;background:#fdeadb"></div><div style="position:absolute;left:1483px;top:1492px;width:13.5px;height:3px;background:#fdc48f"></div><div class="t" style="top:1477.17px;font-size:13.5px;line-height:13.5px;color:#000;font-weight:400;right:213.00px;">16,1 %</div><div style="position:absolute;left:1613px;top:1492px;width:77px;height:3px;background:#fdeadb"></div><div style="position:absolute;left:1613px;top:1492px;width:15.400000000000091px;height:3px;background:#fdc48f"></div><div class="t" style="top:1477.17px;font-size:13.5px;line-height:13.5px;color:#000;font-weight:400;right:107.00px;">1,29</div><div style="position:absolute;left:1714px;top:1492px;width:82px;height:3px;background:#fdeadb"></div><div style="position:absolute;left:1714px;top:1492px;width:41.0px;height:3px;background:#fdc48f"></div><div class="t" style="top:1477.17px;font-size:13.5px;line-height:13.5px;color:#000;font-weight:400;right:12.00px;">1:04</div><div style="position:absolute;left:1820px;top:1492px;width:71px;height:3px;background:#fdeadb"></div><div style="position:absolute;left:1820px;top:1492px;width:34.700000000000045px;height:3px;background:#fdc48f"></div><div style="position:absolute;left:180px;top:1502px;width:6px;height:39px;background:#fe5a3b"></div><div style="position:absolute;left:200px;top:1515.3px;width:15.599999999999994px;height:15.700000000000045px;background:#fff;border:1px solid #d3d3d3;border-radius:3px;box-sizing:border-box;"></div><svg style="position:absolute;left:203.8px;top:1519px" width="9" height="9" viewBox="0 0 9 9"><path d="M0.2 4.5h8.4M4.4 0.3v8.4" stroke="#999" stroke-width="1.6"/></svg><div style="position:absolute;left:228.3px;top:1515.3px;width:13.599999999999994px;height:13.400000000000091px;background:#fde79f;border:1px solid #d9c58d;border-radius:3px;box-sizing:border-box;"></div><svg style="position:absolute;left:227.8px;top:1511.3px" width="18" height="18" viewBox="0 0 18 18"><path d="M3.6 8.2L7.2 12.6L16.6 0.6" fill="none" stroke="#000" stroke-width="1.9" stroke-linejoin="miter"/></svg><div class="t" style="top:1517.00px;font-size:13px;line-height:13px;color:#000;font-weight:400;left:273.30px;">Переходы по ссылкам на сайтах</div><svg style="position:absolute;left:250px;top:1510px" width="22" height="24" viewBox="0 0 22 24"><g fill="none" stroke="#0a74fb" stroke-width="1.6" stroke-linecap="round"><path d="M11.1 9.4A3.2 3.2 0 1 1 14.6 11.9"/><path d="M10.9 15.1A3.2 3.2 0 1 1 7.4 12.1"/><path d="M8.5 14.4L13.4 9.6"/></g></svg><div class="t" style="top:1517.17px;font-size:13.5px;line-height:13.5px;color:#000;font-weight:400;right:444.00px;">2 044</div><div style="position:absolute;left:1376px;top:1532px;width:83px;height:3px;background:#fdeadb"></div><div style="position:absolute;left:1376px;top:1532px;width:4.7999999999999545px;height:3px;background:#fdc48f"></div><div class="t" style="top:1517.17px;font-size:13.5px;line-height:13.5px;color:#000;font-weight:400;right:314.00px;">2 044</div><div style="position:absolute;left:1483px;top:1532px;width:106px;height:3px;background:#fdeadb"></div><div style="position:absolute;left:1483px;top:1532px;width:6.7000000000000455px;height:3px;background:#fdc48f"></div><div class="t" style="top:1517.17px;font-size:13.5px;line-height:13.5px;color:#000;font-weight:400;right:213.00px;">2,59 %</div><div style="position:absolute;left:1613px;top:1532px;width:77px;height:3px;background:#fdeadb"></div><div style="position:absolute;left:1613px;top:1532px;width:2.5px;height:3px;background:#fdc48f"></div><div class="t" style="top:1517.17px;font-size:13.5px;line-height:13.5px;color:#000;font-weight:400;right:107.00px;">2,58</div><div style="position:absolute;left:1714px;top:1532px;width:82px;height:3px;background:#fdeadb"></div><div style="position:absolute;left:1714px;top:1532px;width:82.0px;height:3px;background:#fdc48f"></div><div class="t" style="top:1517.17px;font-size:13.5px;line-height:13.5px;color:#000;font-weight:400;right:12.00px;">1:55</div><div style="position:absolute;left:1820px;top:1532px;width:71px;height:3px;background:#fdeadb"></div><div style="position:absolute;left:1820px;top:1532px;width:62.299999999999955px;height:3px;background:#fdc48f"></div><div style="position:absolute;left:180px;top:1542px;width:6px;height:39px;background:#79b3e6"></div><div style="position:absolute;left:200px;top:1555.3px;width:15.599999999999994px;height:15.700000000000045px;background:#fff;border:1px solid #d3d3d3;border-radius:3px;box-sizing:border-box;"></div><svg style="position:absolute;left:203.8px;top:1559px" width="9" height="9" viewBox="0 0 9 9"><path d="M0.2 4.5h8.4M4.4 0.3v8.4" stroke="#999" stroke-width="1.6"/></svg><div style="position:absolute;left:228.3px;top:1555.3px;width:13.599999999999994px;height:13.400000000000091px;background:#fde79f;border:1px solid #d9c58d;border-radius:3px;box-sizing:border-box;"></div><svg style="position:absolute;left:227.8px;top:1551.3px" width="18" height="18" viewBox="0 0 18 18"><path d="M3.6 8.2L7.2 12.6L16.6 0.6" fill="none" stroke="#000" stroke-width="1.9" stroke-linejoin="miter"/></svg><div class="t" style="top:1557.00px;font-size:13px;line-height:13px;color:#000;font-weight:400;left:273.30px;">Внутренние переходы</div><svg style="position:absolute;left:253px;top:1554.3px" width="16" height="14" viewBox="0 0 16 14"><path d="M8 0.4L0.3 7.2l1 1.1L8 2.4l6.7 5.9 1-1.1z" fill="#1db954"/><path d="M2.6 1.5h1.6v2.6L2.6 5.5z" fill="#1db954"/><path d="M2.8 7.6L8 3.2l5.2 4.4v6.1H9.6V10H6.4v3.7H2.8z" fill="#1db954"/></svg><div class="t" style="top:1557.17px;font-size:13.5px;line-height:13.5px;color:#000;font-weight:400;right:444.00px;">428</div><div style="position:absolute;left:1376px;top:1572px;width:83px;height:3px;background:#fdeadb"></div><div style="position:absolute;left:1376px;top:1572px;width:1px;height:3px;background:#fdc48f"></div><div class="t" style="top:1557.17px;font-size:13.5px;line-height:13.5px;color:#000;font-weight:400;right:314.00px;">320</div><div style="position:absolute;left:1483px;top:1572px;width:106px;height:3px;background:#fdeadb"></div><div style="position:absolute;left:1483px;top:1572px;width:1px;height:3px;background:#fdc48f"></div><div class="t" style="top:1557.17px;font-size:13.5px;line-height:13.5px;color:#000;font-weight:400;right:213.00px;">26,9 %</div><div style="position:absolute;left:1613px;top:1572px;width:77px;height:3px;background:#fdeadb"></div><div style="position:absolute;left:1613px;top:1572px;width:25.799999999999955px;height:3px;background:#fdc48f"></div><div class="t" style="top:1557.17px;font-size:13.5px;line-height:13.5px;color:#000;font-weight:400;right:107.00px;">1,53</div><div style="position:absolute;left:1714px;top:1572px;width:82px;height:3px;background:#fdeadb"></div><div style="position:absolute;left:1714px;top:1572px;width:48.59999999999991px;height:3px;background:#fdc48f"></div><div class="t" style="top:1557.17px;font-size:13.5px;line-height:13.5px;color:#000;font-weight:400;right:12.00px;">2:11</div><div style="position:absolute;left:1820px;top:1572px;width:71px;height:3px;background:#fdeadb"></div><div style="position:absolute;left:1820px;top:1572px;width:71.0px;height:3px;background:#fdc48f"></div><div style="position:absolute;left:180px;top:1582px;width:6px;height:39px;background:#a353b6"></div><div style="position:absolute;left:200px;top:1595.3px;width:15.599999999999994px;height:15.700000000000045px;background:#fff;border:1px solid #d3d3d3;border-radius:3px;box-sizing:border-box;"></div><svg style="position:absolute;left:203.8px;top:1599px" width="9" height="9" viewBox="0 0 9 9"><path d="M0.2 4.5h8.4M4.4 0.3v8.4" stroke="#999" stroke-width="1.6"/></svg><div style="position:absolute;left:228.3px;top:1595.3px;width:13.599999999999994px;height:13.400000000000091px;background:#fde79f;border:1px solid #d9c58d;border-radius:3px;box-sizing:border-box;"></div><svg style="position:absolute;left:227.8px;top:1591.3px" width="18" height="18" viewBox="0 0 18 18"><path d="M3.6 8.2L7.2 12.6L16.6 0.6" fill="none" stroke="#000" stroke-width="1.9" stroke-linejoin="miter"/></svg><div class="t" style="top:1597.00px;font-size:13px;line-height:13px;color:#000;font-weight:400;left:273.30px;">Переходы из социальных сетей</div><svg style="position:absolute;left:254px;top:1593.5px" width="15" height="16" viewBox="0 0 15 16"><path d="M4.2 2.2C4.8.9 6 .3 7.5.3s2.7.6 3.3 1.9l.1 1.9c0 1.8-.7 3.2-1.6 4l.1 1H5.6l.1-1C4.8 7.3 4.1 5.9 4.1 4.1z" fill="#a253e0"/><path d="M.5 13.3c1.2-1.4 3.1-2.4 5-2.6L7.5 12.4l2-1.7c1.9.2 3.8 1.2 5 2.6-1.5 1.6-4.4 2.5-7 2.5s-5.5-.9-7-2.5z" fill="#a253e0"/></svg><div class="t" style="top:1597.17px;font-size:13.5px;line-height:13.5px;color:#000;font-weight:400;right:444.00px;">48</div><div style="position:absolute;left:1376px;top:1612px;width:83px;height:3px;background:#fdeadb"></div><div class="t" style="top:1597.17px;font-size:13.5px;line-height:13.5px;color:#000;font-weight:400;right:314.00px;">46</div><div style="position:absolute;left:1483px;top:1612px;width:106px;height:3px;background:#fdeadb"></div><div class="t" style="top:1597.17px;font-size:13.5px;line-height:13.5px;color:#000;font-weight:400;right:213.00px;">33,3 %</div><div style="position:absolute;left:1613px;top:1612px;width:77px;height:3px;background:#fdeadb"></div><div style="position:absolute;left:1613px;top:1612px;width:31.90000000000009px;height:3px;background:#fdc48f"></div><div class="t" style="top:1597.17px;font-size:13.5px;line-height:13.5px;color:#000;font-weight:400;right:107.00px;">1,35</div><div style="position:absolute;left:1714px;top:1612px;width:82px;height:3px;background:#fdeadb"></div><div style="position:absolute;left:1714px;top:1612px;width:42.90000000000009px;height:3px;background:#fdc48f"></div><div class="t" style="top:1597.17px;font-size:13.5px;line-height:13.5px;color:#000;font-weight:400;right:12.00px;">0:36</div><div style="position:absolute;left:1820px;top:1612px;width:71px;height:3px;background:#fdeadb"></div><div style="position:absolute;left:1820px;top:1612px;width:19.5px;height:3px;background:#fdc48f"></div><div style="position:absolute;left:228.3px;top:1635.3px;width:13.599999999999994px;height:13.400000000000091px;background:#fff;border:1px solid #cfcfcf;border-radius:3px;box-sizing:border-box;"></div><div class="t" style="top:1637.00px;font-size:13px;line-height:13px;color:#000;font-weight:400;left:273.30px;">Не определено</div><svg style="position:absolute;left:250px;top:1630px" width="22" height="24" viewBox="0 0 22 24"><path d="M10.7 4.4V8.4" stroke="#80868b" stroke-width="1.6" stroke-linecap="round" transform="rotate(0 10.7 11.7)"/><path d="M10.7 4.4V8.4" stroke="#80868b" stroke-width="1.6" stroke-linecap="round" transform="rotate(45 10.7 11.7)"/><path d="M10.7 4.4V8.4" stroke="#80868b" stroke-width="1.6" stroke-linecap="round" transform="rotate(90 10.7 11.7)"/><path d="M10.7 4.4V8.4" stroke="#80868b" stroke-width="1.6" stroke-linecap="round" transform="rotate(135 10.7 11.7)"/><path d="M10.7 4.4V8.4" stroke="#80868b" stroke-width="1.6" stroke-linecap="round" transform="rotate(180 10.7 11.7)"/><path d="M10.7 4.4V8.4" stroke="#80868b" stroke-width="1.6" stroke-linecap="round" transform="rotate(225 10.7 11.7)"/><path d="M10.7 4.4V8.4" stroke="#80868b" stroke-width="1.6" stroke-linecap="round" transform="rotate(270 10.7 11.7)"/><path d="M10.7 4.4V8.4" stroke="#80868b" stroke-width="1.6" stroke-linecap="round" transform="rotate(315 10.7 11.7)"/></svg><div class="t" style="top:1637.17px;font-size:13.5px;line-height:13.5px;color:#000;font-weight:400;right:444.00px;">46</div><div style="position:absolute;left:1376px;top:1652px;width:83px;height:3px;background:#fdeadb"></div><div class="t" style="top:1637.17px;font-size:13.5px;line-height:13.5px;color:#000;font-weight:400;right:314.00px;">39</div><div style="position:absolute;left:1483px;top:1652px;width:106px;height:3px;background:#fdeadb"></div><div class="t" style="top:1637.17px;font-size:13.5px;line-height:13.5px;color:#000;font-weight:400;right:213.00px;">80,4 %</div><div style="position:absolute;left:1613px;top:1652px;width:77px;height:3px;background:#fdeadb"></div><div style="position:absolute;left:1613px;top:1652px;width:77.0px;height:3px;background:#fdc48f"></div><div class="t" style="top:1637.17px;font-size:13.5px;line-height:13.5px;color:#000;font-weight:400;right:107.00px;">1,2</div><div style="position:absolute;left:1714px;top:1652px;width:82px;height:3px;background:#fdeadb"></div><div style="position:absolute;left:1714px;top:1652px;width:38.09999999999991px;height:3px;background:#fdc48f"></div><div class="t" style="top:1637.17px;font-size:13.5px;line-height:13.5px;color:#000;font-weight:400;right:12.00px;">0:50</div><div style="position:absolute;left:1820px;top:1652px;width:71px;height:3px;background:#fdeadb"></div><div style="position:absolute;left:1820px;top:1652px;width:27.09999999999991px;height:3px;background:#fdc48f"></div><div style="position:absolute;left:228.3px;top:1675.3px;width:13.599999999999994px;height:13.400000000000091px;background:#fff;border:1px solid #cfcfcf;border-radius:3px;box-sizing:border-box;"></div><div class="t" style="top:1677.00px;font-size:13px;line-height:13px;color:#000;font-weight:400;left:273.30px;">Переходы с сохранённых страниц</div><svg style="position:absolute;left:255.6px;top:1675.3px" width="11" height="14" viewBox="0 0 11 14"><path d="M0 0h6.5v4.5H11V13.5H0z" fill="#b97d55"/><path d="M7.4 0L11 3.6H7.4z" fill="#b97d55"/><path d="M2 7.6h6.5M2 10h4.5" stroke="#fff" stroke-width="1"/></svg><div class="t" style="top:1677.17px;font-size:13.5px;line-height:13.5px;color:#000;font-weight:400;right:444.00px;">5</div><div style="position:absolute;left:1376px;top:1692px;width:83px;height:3px;background:#fdeadb"></div><div class="t" style="top:1677.17px;font-size:13.5px;line-height:13.5px;color:#000;font-weight:400;right:314.00px;">5</div><div style="position:absolute;left:1483px;top:1692px;width:106px;height:3px;background:#fdeadb"></div><div class="t" style="top:1677.17px;font-size:13.5px;line-height:13.5px;color:#000;font-weight:400;right:213.00px;">40 %</div><div style="position:absolute;left:1613px;top:1692px;width:77px;height:3px;background:#fdeadb"></div><div style="position:absolute;left:1613px;top:1692px;width:38.299999999999955px;height:3px;background:#fdc48f"></div><div class="t" style="top:1677.17px;font-size:13.5px;line-height:13.5px;color:#000;font-weight:400;right:107.00px;">1,2</div><div style="position:absolute;left:1714px;top:1692px;width:82px;height:3px;background:#fdeadb"></div><div style="position:absolute;left:1714px;top:1692px;width:38.09999999999991px;height:3px;background:#fdc48f"></div><div class="t" style="top:1677.17px;font-size:13.5px;line-height:13.5px;color:#000;font-weight:400;right:12.00px;">0:13</div><div style="position:absolute;left:1820px;top:1692px;width:71px;height:3px;background:#fdeadb"></div><div style="position:absolute;left:1820px;top:1692px;width:7.0px;height:3px;background:#fdc48f"></div><div style="position:absolute;left:200px;top:1715.3px;width:15.599999999999994px;height:15.700000000000045px;background:#fff;border:1px solid #d3d3d3;border-radius:3px;box-sizing:border-box;"></div><svg style="position:absolute;left:203.8px;top:1719px" width="9" height="9" viewBox="0 0 9 9"><path d="M0.2 4.5h8.4M4.4 0.3v8.4" stroke="#999" stroke-width="1.6"/></svg><div style="position:absolute;left:228.3px;top:1715.3px;width:13.599999999999994px;height:13.400000000000091px;background:#fff;border:1px solid #cfcfcf;border-radius:3px;box-sizing:border-box;"></div><div class="t" style="top:1717.00px;font-size:13px;line-height:13px;color:#000;font-weight:400;left:273.30px;">Переходы из мессенджеров</div><svg style="position:absolute;left:253.5px;top:1715px" width="16" height="15" viewBox="0 0 16 15"><path d="M8 .4c4.2 0 7.6 2.2 7.6 5.4S12.2 11.2 8 11.2c-.9 0-1.8-.1-2.6-.3L1.6 14.6 2.6 10.3C1.2 9.3.4 7.8.4 5.8.4 2.6 3.8.4 8 .4z" fill="#29aed6"/><path d="M4 4.8h7.5M4 6.8h4" stroke="#fff" stroke-width="1"/></svg><div class="t" style="top:1717.17px;font-size:13.5px;line-height:13.5px;color:#000;font-weight:400;right:444.00px;">3</div><div style="position:absolute;left:1376px;top:1732px;width:83px;height:3px;background:#fdeadb"></div><div class="t" style="top:1717.17px;font-size:13.5px;line-height:13.5px;color:#000;font-weight:400;right:314.00px;">3</div><div style="position:absolute;left:1483px;top:1732px;width:106px;height:3px;background:#fdeadb"></div><div class="t" style="top:1717.17px;font-size:13.5px;line-height:13.5px;color:#000;font-weight:400;right:213.00px;">0 %</div><div style="position:absolute;left:1613px;top:1732px;width:77px;height:3px;background:#fdeadb"></div><div class="t" style="top:1717.17px;font-size:13.5px;line-height:13.5px;color:#000;font-weight:400;right:107.00px;">1</div><div style="position:absolute;left:1714px;top:1732px;width:82px;height:3px;background:#fdeadb"></div><div style="position:absolute;left:1714px;top:1732px;width:31.799999999999955px;height:3px;background:#fdc48f"></div><div class="t" style="top:1717.17px;font-size:13.5px;line-height:13.5px;color:#000;font-weight:400;right:12.00px;">0:15</div><div style="position:absolute;left:1820px;top:1732px;width:71px;height:3px;background:#fdeadb"></div><div style="position:absolute;left:1820px;top:1732px;width:8.099999999999909px;height:3px;background:#fdc48f"></div><div style="position:absolute;left:200px;top:1755.3px;width:15.599999999999994px;height:15.700000000000045px;background:#fff;border:1px solid #d3d3d3;border-radius:3px;box-sizing:border-box;"></div><svg style="position:absolute;left:203.8px;top:1759px" width="9" height="9" viewBox="0 0 9 9"><path d="M0.2 4.5h8.4M4.4 0.3v8.4" stroke="#999" stroke-width="1.6"/></svg><div style="position:absolute;left:228.3px;top:1755.3px;width:13.599999999999994px;height:13.400000000000091px;background:#fff;border:1px solid #cfcfcf;border-radius:3px;box-sizing:border-box;"></div><div class="t" style="top:1757.00px;font-size:13px;line-height:13px;color:#000;font-weight:400;left:273.30px;">Переходы из рекомендательных систем</div><svg style="position:absolute;left:254px;top:1754px" width="16" height="15" viewBox="0 0 16 15"><path d="M5.4 6.2L8.8 1.6c.4-.6 1.4-1.6 1.8-1.2.6.5-.1 2.4-.3 4.6h3.6c1.2 0 2.1 1 1.9 2.2l-.8 5.2c-.2 1-1.1 1.8-2.1 1.8H5.6z" fill="#ed4bd0"/><path d="M.5 6.8h3.2v7.7H.3z" fill="#ed4bd0"/></svg><div class="t" style="top:1757.17px;font-size:13.5px;line-height:13.5px;color:#000;font-weight:400;right:444.00px;">1</div><div style="position:absolute;left:1376px;top:1772px;width:83px;height:3px;background:#fdeadb"></div><div class="t" style="top:1757.17px;font-size:13.5px;line-height:13.5px;color:#000;font-weight:400;right:314.00px;">1</div><div style="position:absolute;left:1483px;top:1772px;width:106px;height:3px;background:#fdeadb"></div><div class="t" style="top:1757.17px;font-size:13.5px;line-height:13.5px;color:#000;font-weight:400;right:213.00px;">0 %</div><div style="position:absolute;left:1613px;top:1772px;width:77px;height:3px;background:#fdeadb"></div><div class="t" style="top:1757.17px;font-size:13.5px;line-height:13.5px;color:#000;font-weight:400;right:107.00px;">1</div><div style="position:absolute;left:1714px;top:1772px;width:82px;height:3px;background:#fdeadb"></div><div style="position:absolute;left:1714px;top:1772px;width:31.799999999999955px;height:3px;background:#fdc48f"></div><div class="t" style="top:1757.17px;font-size:13.5px;line-height:13.5px;color:#000;font-weight:400;right:12.00px;">0:15</div><div style="position:absolute;left:1820px;top:1772px;width:71px;height:3px;background:#fdeadb"></div><div style="position:absolute;left:1820px;top:1772px;width:8.099999999999909px;height:3px;background:#fdc48f"></div><div style="position:absolute;left:180px;top:1021px;width:1723px;height:1px;background:#e8e8e8"></div><div style="position:absolute;left:180px;top:1061px;width:1723px;height:1px;background:#e8e8e8"></div><div style="position:absolute;left:180px;top:1101px;width:1723px;height:1px;background:#e8e8e8"></div><div style="position:absolute;left:180px;top:1141px;width:1723px;height:1px;background:#e8e8e8"></div><div style="position:absolute;left:180px;top:1181px;width:1723px;height:1px;background:#e8e8e8"></div><div style="position:absolute;left:180px;top:1221px;width:1723px;height:1px;background:#e8e8e8"></div><div style="position:absolute;left:180px;top:1261px;width:1723px;height:1px;background:#e8e8e8"></div><div style="position:absolute;left:180px;top:1301px;width:1723px;height:1px;background:#e8e8e8"></div><div style="position:absolute;left:180px;top:1341px;width:1723px;height:1px;background:#e8e8e8"></div><div style="position:absolute;left:180px;top:1381px;width:1723px;height:1px;background:#e8e8e8"></div><div style="position:absolute;left:180px;top:1421px;width:1723px;height:1px;background:#e8e8e8"></div><div style="position:absolute;left:180px;top:1461px;width:1723px;height:1px;background:#e8e8e8"></div><div style="position:absolute;left:180px;top:1501px;width:1723px;height:1px;background:#e8e8e8"></div><div style="position:absolute;left:180px;top:1541px;width:1723px;height:1px;background:#e8e8e8"></div><div style="position:absolute;left:180px;top:1581px;width:1723px;height:1px;background:#e8e8e8"></div><div style="position:absolute;left:180px;top:1621px;width:1723px;height:1px;background:#e8e8e8"></div><div style="position:absolute;left:180px;top:1661px;width:1723px;height:1px;background:#e8e8e8"></div><div style="position:absolute;left:180px;top:1701px;width:1723px;height:1px;background:#e8e8e8"></div><div style="position:absolute;left:180px;top:1741px;width:1723px;height:1px;background:#e8e8e8"></div><div style="position:absolute;left:180px;top:1781px;width:1723px;height:1px;background:#dedede"></div><div class="t" style="top:1794.22px;font-size:12.5px;line-height:12.5px;color:#8a94a6;font-weight:400;letter-spacing:-0.290px;left:20.50px;">Пользовательское соглашение</div><div class="t" style="top:1794.22px;font-size:12.5px;line-height:12.5px;color:#8a94a6;font-weight:400;letter-spacing:-0.156px;left:209.00px;">Помощь</div><div class="t" style="top:1794.22px;font-size:12.5px;line-height:12.5px;color:#8a94a6;font-weight:400;letter-spacing:-0.297px;left:272.50px;">Задать вопрос</div><div class="t" style="top:1794.22px;font-size:12.5px;line-height:12.5px;color:#8a94a6;font-weight:400;letter-spacing:-0.165px;left:369.50px;">Предложить идею</div><div class="t" style="top:1794.22px;font-size:12.5px;line-height:12.5px;color:#8a94a6;font-weight:400;letter-spacing:-0.132px;left:985.00px;">Telegram</div><div class="t" style="top:1794.22px;font-size:12.5px;line-height:12.5px;color:#8a94a6;font-weight:400;letter-spacing:0.281px;left:1051.50px;">Twitter</div><div class="t" style="top:1794.22px;font-size:12.5px;line-height:12.5px;color:#8a94a6;font-weight:400;letter-spacing:-0.354px;left:1106.00px;">YouTube</div><svg style="position:absolute;left:1665px;top:1797px" width="15" height="10" viewBox="0 0 15 10"><rect width="15" height="3.4" fill="#fff"/><rect y="3.3" width="15" height="3.4" fill="#1c3fa6"/><rect y="6.6" width="15" height="3.4" fill="#e3001b"/><rect width="15" height="10" fill="none" stroke="#eee" stroke-width=".5"/></svg><div class="t" style="top:1794.22px;font-size:12.5px;line-height:12.5px;color:#8a94a6;font-weight:400;letter-spacing:-1.984px;left:1684.00px;">Ru</div><div class="t" style="top:1794.22px;font-size:12.5px;line-height:12.5px;color:#000;font-weight:400;letter-spacing:-0.317px;left:1714.00px;">© 2008–2019 ООО «<span style="color:#8a94a6">ЯНДЕКС</span>»</div>
</body></html>
